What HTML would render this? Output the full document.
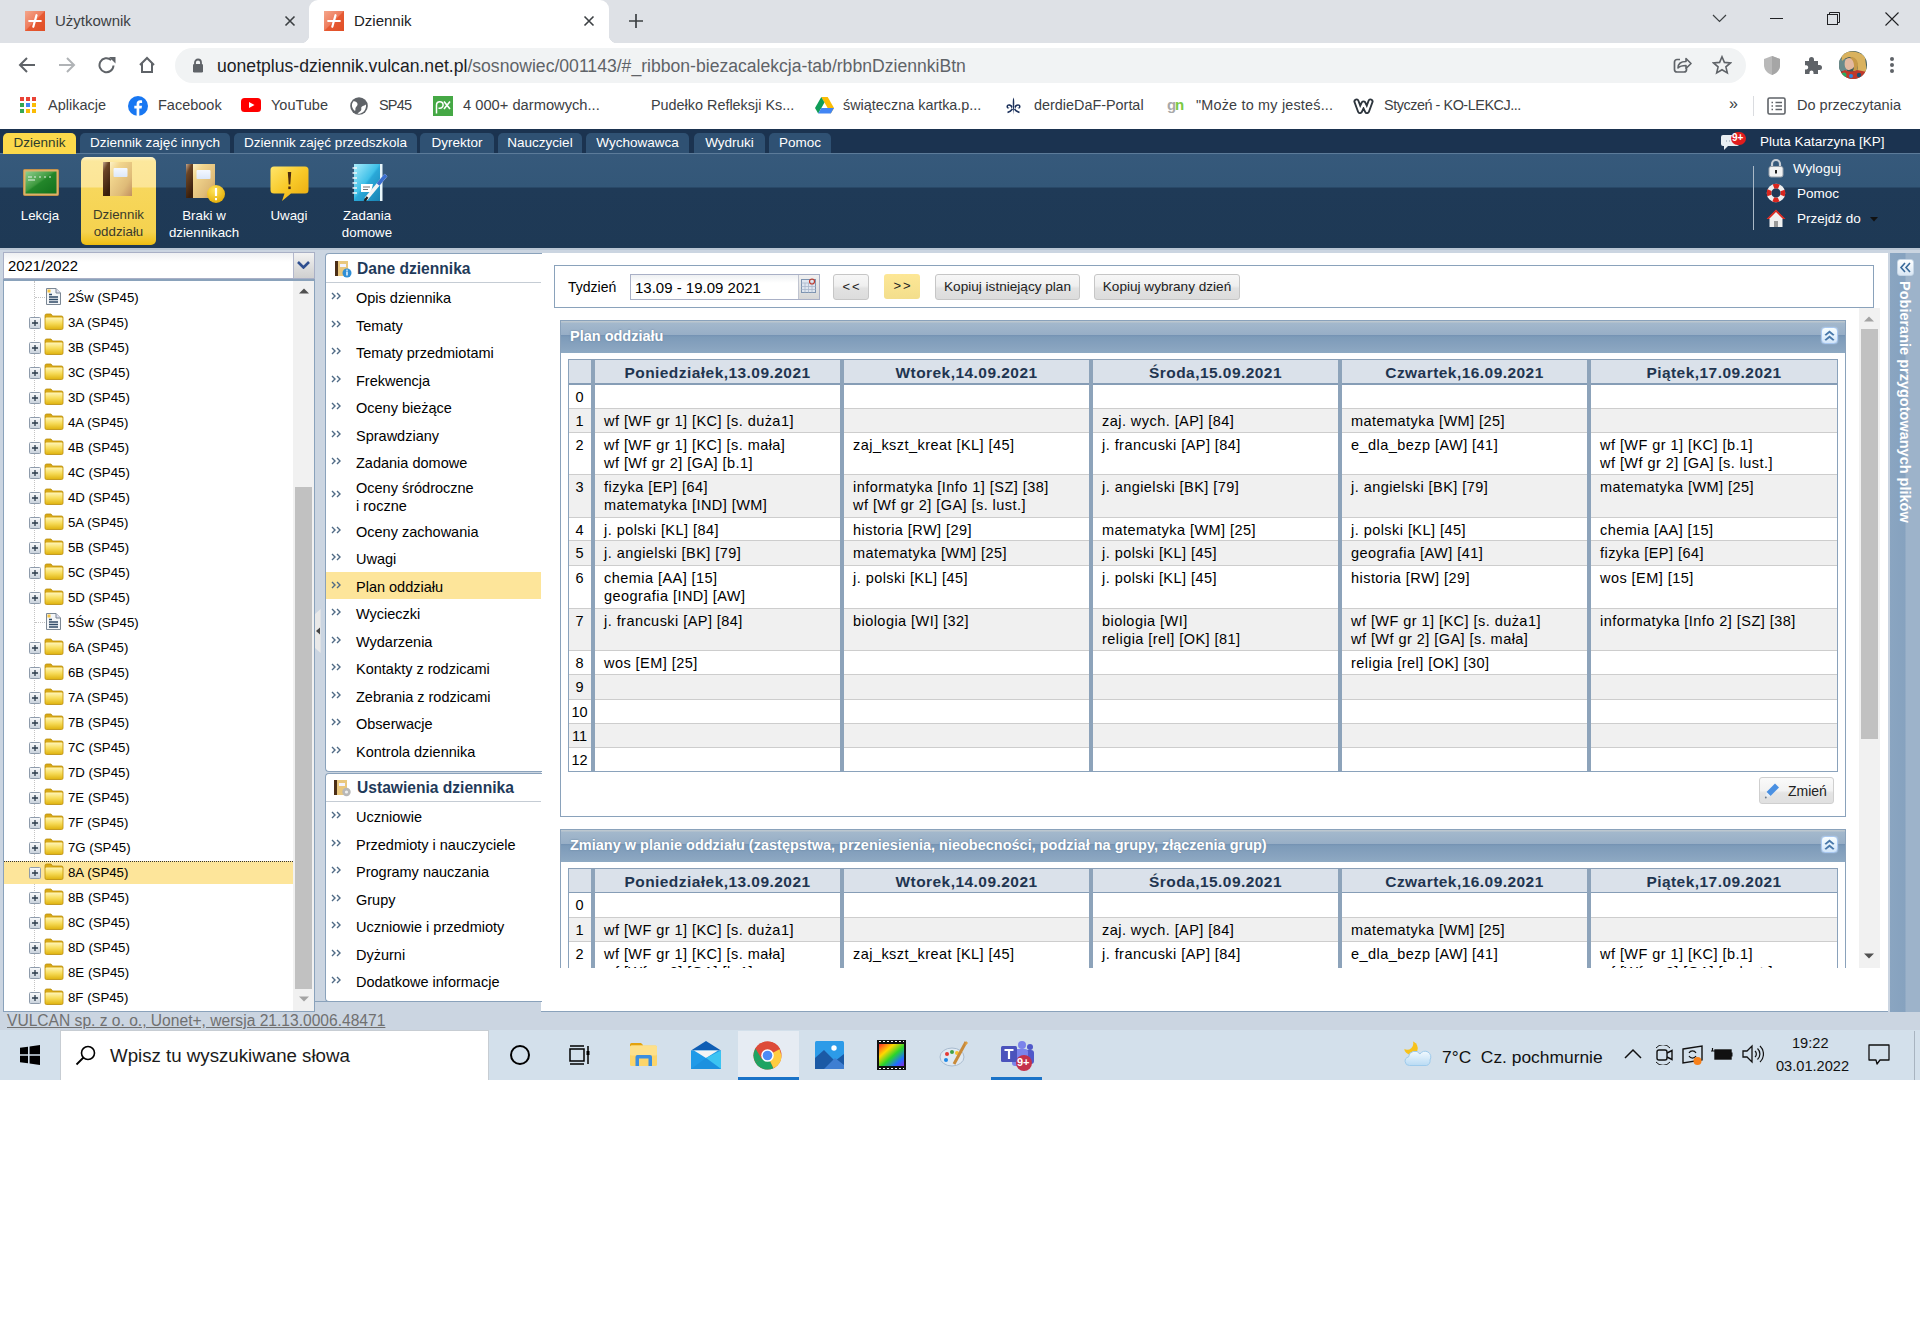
<!DOCTYPE html><html><head><meta charset="utf-8"><title>Dziennik</title><style>
*{box-sizing:border-box}
html,body{margin:0;padding:0}
body{width:1920px;height:1333px;position:relative;overflow:hidden;background:#fff;font-family:"Liberation Sans",sans-serif;color:#000}
.a{position:absolute}
.t{position:absolute;white-space:nowrap;line-height:1}
.ct{position:absolute;white-space:nowrap;line-height:1;font-size:15px;color:#3c4043}
.mtab{position:absolute;top:133px;height:20px;background:#2f5173;border-radius:5px 5px 0 0;color:#fff;font-size:13.5px;line-height:19px;text-align:center;white-space:nowrap}
.rl{position:absolute;color:#fff;font-size:13.3px;line-height:17px;text-align:center;white-space:nowrap}
.tr{position:absolute;left:4px;width:289px;height:25px}
.tri{position:absolute;font-size:13.25px;line-height:1;white-space:nowrap;left:68px}
.mi{position:absolute;left:356px;font-size:14.5px;line-height:18px;white-space:nowrap;color:#000}
.chev{position:absolute;left:331px;width:11px;height:8px}
.cell{position:absolute;font-size:14.5px;line-height:18px;white-space:nowrap;letter-spacing:0.45px;color:#000}
.hd{position:absolute;font-weight:bold;font-size:15.5px;letter-spacing:0.45px;color:#1f3550;text-align:center;line-height:25px;white-space:nowrap}
</style></head><body>
<div class="a" style="left:0;top:0;width:1920px;height:43px;background:#dee1e6"></div>
<div class="a" style="left:25px;top:11px;width:20px;height:20px;background:linear-gradient(135deg,#f4a68b 0,#ee7c5d 48%,#e65a33 52%,#e04e25 100%)"><svg width="20" height="20" viewBox="0 0 20 20" style="position:absolute;left:0;top:0"><path d="M11.5 4.2 L8.3 15.8" stroke="#fff" stroke-width="2.2" stroke-linecap="round"/><path d="M4.2 10 H15.8" stroke="#fff" stroke-width="2.2" stroke-linecap="round"/></svg></div>
<div class="ct" style="left:55px;top:13px">Użytkownik</div>
<svg class="a" style="left:284px;top:15px" width="12" height="12" viewBox="0 0 12 12"><path d="M1.5 1.5 L10.5 10.5 M10.5 1.5 L1.5 10.5" stroke="#3c4043" stroke-width="1.6"/></svg>
<div class="a" style="left:309px;top:0;width:300px;height:43px;background:#fff;border-radius:9px 9px 0 0"></div>
<div class="a" style="left:301px;top:35px;width:8px;height:8px;background:radial-gradient(circle at 0 0,#dee1e6 8px,#fff 8.5px)"></div>
<div class="a" style="left:609px;top:35px;width:8px;height:8px;background:radial-gradient(circle at 100% 0,#dee1e6 8px,#fff 8.5px)"></div>
<div class="a" style="left:324px;top:11px;width:20px;height:20px;background:linear-gradient(135deg,#f4a68b 0,#ee7c5d 48%,#e65a33 52%,#e04e25 100%)"><svg width="20" height="20" viewBox="0 0 20 20" style="position:absolute;left:0;top:0"><path d="M11.5 4.2 L8.3 15.8" stroke="#fff" stroke-width="2.2" stroke-linecap="round"/><path d="M4.2 10 H15.8" stroke="#fff" stroke-width="2.2" stroke-linecap="round"/></svg></div>
<div class="ct" style="left:354px;top:13px;color:#202124">Dziennik</div>
<svg class="a" style="left:583px;top:15px" width="12" height="12" viewBox="0 0 12 12"><path d="M1.5 1.5 L10.5 10.5 M10.5 1.5 L1.5 10.5" stroke="#3c4043" stroke-width="1.6"/></svg>
<svg class="a" style="left:628px;top:13px" width="16" height="16" viewBox="0 0 16 16"><path d="M8 1 V15 M1 8 H15" stroke="#3c4043" stroke-width="1.7"/></svg>
<svg class="a" style="left:1712px;top:13px" width="15" height="10" viewBox="0 0 15 10"><path d="M1 2 L7.5 8.5 L14 2" stroke="#3c4043" stroke-width="1.2" fill="none"/></svg>
<div class="a" style="left:1770px;top:18px;width:13px;height:1px;background:#202124"></div>
<svg class="a" style="left:1826px;top:11px" width="14" height="14" viewBox="0 0 14 14"><rect x="1.5" y="3.5" width="10" height="10" stroke="#202124" fill="none"/><path d="M3.5 3.5 V1.5 H13.5 V11.5 H11.5" stroke="#202124" fill="none"/></svg>
<svg class="a" style="left:1885px;top:12px" width="14" height="14" viewBox="0 0 14 14"><path d="M0.5 0.5 L13.5 13.5 M13.5 0.5 L0.5 13.5" stroke="#202124" stroke-width="1.1"/></svg>
<svg class="a" style="left:18px;top:56px" width="18" height="18" viewBox="0 0 18 18"><path d="M17 9 H2.5 M9 2 L2 9 L9 16" stroke="#5f6368" stroke-width="2" fill="none"/></svg>
<svg class="a" style="left:58px;top:56px" width="18" height="18" viewBox="0 0 18 18"><path d="M1 9 H15.5 M9 2 L16 9 L9 16" stroke="#b0b3b6" stroke-width="2" fill="none"/></svg>
<svg class="a" style="left:98px;top:56px" width="19" height="18" viewBox="0 0 19 18"><path d="M15.5 9.5 A7 7 0 1 1 13.2 4" stroke="#5f6368" stroke-width="2" fill="none"/><path d="M11 1 L17.5 1 L17.5 7.5 Z" fill="#5f6368"/></svg>
<svg class="a" style="left:138px;top:56px" width="18" height="18" viewBox="0 0 18 18"><path d="M2 9 L9 2 L16 9 M4 7.5 V16 H14 V7.5" stroke="#5f6368" stroke-width="2" fill="none" stroke-linejoin="miter"/></svg>
<div class="a" style="left:175px;top:48px;width:1571px;height:35px;background:#f1f3f4;border-radius:18px"></div>
<svg class="a" style="left:192px;top:58px" width="12" height="15" viewBox="0 0 12 15"><path d="M3 6.5 V4.5 A3 3 0 0 1 9 4.5 V6.5" stroke="#5f6368" stroke-width="1.8" fill="none"/><rect x="1" y="6" width="10" height="8.5" rx="1.2" fill="#5f6368"/></svg>
<div class="t" style="left:217px;top:58px;font-size:17.6px;color:#202124">uonetplus-dziennik.vulcan.net.pl<span style="color:#5f6368">/sosnowiec/001143/#_ribbon-biezacalekcja-tab/rbbnDziennkiBtn</span></div>
<svg class="a" style="left:1672px;top:56px" width="20" height="18" viewBox="0 0 20 18"><path d="M8 3.5 H5 A2.5 2.5 0 0 0 2.5 6 V13.5 A2.5 2.5 0 0 0 5 16 H12 A2.5 2.5 0 0 0 14.5 13.5 V12.5" stroke="#5f6368" stroke-width="1.7" fill="none"/><path d="M6 12 C6 7 10 5.5 14 5.5 V2.5 L19 7.5 L14 12.5 V9.5 C11 9.5 8 10 6 12 Z" stroke="#5f6368" stroke-width="1.6" fill="none" stroke-linejoin="round"/></svg>
<svg class="a" style="left:1712px;top:55px" width="20" height="20" viewBox="0 0 20 20"><path d="M10 1.8 L12.4 7.4 L18.5 7.9 L13.9 11.9 L15.3 17.9 L10 14.7 L4.7 17.9 L6.1 11.9 L1.5 7.9 L7.6 7.4 Z" stroke="#5f6368" stroke-width="1.6" fill="none" stroke-linejoin="miter"/></svg>
<svg class="a" style="left:1763px;top:55px" width="18" height="21" viewBox="0 0 18 21"><path d="M9 1 L17 4 V10 C17 15 13.5 18.5 9 20 C4.5 18.5 1 15 1 10 V4 Z" fill="#b9b9b9"/><path d="M9 1 L17 4 V10 C17 15 13.5 18.5 9 20 Z" fill="#a6a6a6"/></svg>
<svg class="a" style="left:1802px;top:55px" width="20" height="20" viewBox="0 0 20 20"><path d="M3 6 H7 V4.5 A2.5 2.5 0 0 1 12 4.5 V6 H16 V10 H17.5 A2.5 2.5 0 0 1 17.5 15 H16 V19 H11.5 V17.5 A2 2 0 0 0 7.5 17.5 V19 H3 V14.5 H4.5 A2.2 2.2 0 0 0 4.5 10.2 H3 Z" fill="#5f6368"/></svg>
<svg class="a" style="left:1839px;top:51px" width="28" height="28" viewBox="0 0 28 28"><defs><clipPath id="avc"><circle cx="14" cy="14" r="14"/></clipPath></defs><g clip-path="url(#avc)"><rect width="28" height="28" fill="#3d5a5a"/><rect x="0" y="8" width="8" height="12" fill="#6a8a8a"/><path d="M2 4 C6 -1 20 -1 26 6 L28 22 L18 20 C20 14 18 8 12 6 C8 6 5 8 3 10 Z" fill="#d9b25e"/><path d="M7 8 C10 6 15 7 16 12 C16 17 12 19 9 19 C6 18 5 14 6 10 Z" fill="#e3b9a0"/><path d="M12 6 C16 6 19 9 19 14 L18 20 L14 20 C16 15 15 9 11 7 Z" fill="#c79a48"/><path d="M0 22 L6 19 C10 21 14 21 18 19 L28 21 V28 H0 Z" fill="#c0392b"/><circle cx="5" cy="24" r="2.5" fill="#27ae60"/><circle cx="12" cy="25" r="2" fill="#2e86de"/><circle cx="20" cy="24" r="2.2" fill="#1a5276"/><circle cx="24" cy="26" r="2" fill="#e74c3c"/></g></svg>
<div class="a" style="left:1890px;top:57px;width:4px;height:4px;border-radius:50%;background:#5f6368"></div>
<div class="a" style="left:1890px;top:63px;width:4px;height:4px;border-radius:50%;background:#5f6368"></div>
<div class="a" style="left:1890px;top:69px;width:4px;height:4px;border-radius:50%;background:#5f6368"></div>
<div class="a" style="left:20px;top:97px;width:4px;height:4px;background:#ea4335"></div>
<div class="a" style="left:26px;top:97px;width:4px;height:4px;background:#ea4335"></div>
<div class="a" style="left:32px;top:97px;width:4px;height:4px;background:#ea4335"></div>
<div class="a" style="left:20px;top:103px;width:4px;height:4px;background:#34a853"></div>
<div class="a" style="left:26px;top:103px;width:4px;height:4px;background:#4285f4"></div>
<div class="a" style="left:32px;top:103px;width:4px;height:4px;background:#fbbc05"></div>
<div class="a" style="left:20px;top:109px;width:4px;height:4px;background:#34a853"></div>
<div class="a" style="left:26px;top:109px;width:4px;height:4px;background:#fbbc05"></div>
<div class="a" style="left:32px;top:109px;width:4px;height:4px;background:#fbbc05"></div>
<div class="ct" style="left:48px;top:98px;font-size:14.5px">Aplikacje</div>
<svg class="a" style="left:128px;top:96px" width="20" height="20" viewBox="0 0 20 20"><circle cx="10" cy="10" r="10" fill="#1877f2"/><path d="M11.3 20 V12.6 H13.6 L14 9.8 H11.3 V8.2 C11.3 7.4 11.6 6.9 12.7 6.9 H14.1 V4.4 C13.8 4.4 13 4.3 12.1 4.3 C10 4.3 8.6 5.6 8.6 7.9 V9.8 H6.3 V12.6 H8.6 V20 Z" fill="#fff"/></svg>
<div class="ct" style="left:158px;top:98px;font-size:14.5px">Facebook</div>
<svg class="a" style="left:241px;top:98px" width="20" height="15" viewBox="0 0 20 15"><rect x="0" y="0" width="20" height="14" rx="3.5" fill="#ff0000"/><path d="M8 4 L13.5 7 L8 10 Z" fill="#fff"/></svg>
<div class="ct" style="left:271px;top:98px;font-size:14.5px">YouTube</div>
<svg class="a" style="left:350px;top:97px" width="18" height="18" viewBox="0 0 18 18"><circle cx="9" cy="9" r="8.8" fill="#5f6368"/><path d="M3.2 4.5 C5 4 7 5 7.5 6.8 C8 8.5 6 9.5 5.5 11 C5.2 12 5.8 13 5 14 C3 12.5 1.5 10 2 7 Z" fill="#fff"/><path d="M9.5 2.2 C12 2.3 14.6 4 15.6 6 C14.5 7.8 12 7.2 11.2 8.8 C10.5 10.5 12.8 11.5 13.8 12.5 C12.5 14.8 10 16 7.6 15.9 C8.5 14.5 10 13.6 9.5 12 C9 10.5 7.8 9.8 8.5 8.2 C9.2 6.6 11 6.2 10.7 4.5 C10.5 3.5 9.8 3 9.5 2.2 Z" fill="#fff" opacity="0"/><path d="M16 7.5 C14.5 9 12.5 8.5 11.5 10 C10.8 11.2 11.8 12.2 11 13.5 C10.2 14.8 8.5 15 7.5 16.8 C12.5 17.2 16.5 13 16 7.5 Z" fill="#fff"/></svg>
<div class="ct" style="left:379px;top:98px;font-size:14.5px;letter-spacing:-0.8px">SP45</div>
<svg class="a" style="left:433px;top:96px" width="20" height="20" viewBox="0 0 20 20"><rect width="20" height="20" fill="#45a845"/><path d="M3.5 17.5 V9 A3.3 3.3 0 1 1 6.8 12.3 H5.5" stroke="#fff" stroke-width="1.5" fill="none"/><path d="M11 5.5 L17 13 M17 5.5 L11 13" stroke="#fff" stroke-width="1.6"/></svg>
<div class="ct" style="left:463px;top:98px;font-size:14.7px">4 000+ darmowych...</div>
<div class="ct" style="left:651px;top:98px;font-size:14.4px">Pudełko Refleksji Ks...</div>
<svg class="a" style="left:815px;top:97px" width="19" height="17" viewBox="0 0 19 17"><path d="M6.3 0 H12.7 L19 11 L15.8 16.5 Z" fill="#fbbc04"/><path d="M6.3 0 L0 11 L3.2 16.5 L9.5 5.5 Z" fill="#0f9d58"/><path d="M3.2 16.5 H15.8 L19 11 H6.3 Z" fill="#4285f4"/></svg>
<div class="ct" style="left:843px;top:98px;font-size:14.4px">świąteczna kartka.p...</div>
<svg class="a" style="left:1005px;top:97px" width="17" height="18" viewBox="0 0 17 18"><path d="M8.5 0.5 C7.5 3 7.5 6 8.5 17.5 C9.5 6 9.5 3 8.5 0.5 Z" fill="#1a2f5a"/><path d="M7.5 9 C5 6 1 7 1.5 10 C2 12 4 12 4.5 10.5 C3.5 11 2.5 10 3.2 9 C4 8 6 9 7 12 Z" fill="#1a2f5a"/><path d="M9.5 9 C12 6 16 7 15.5 10 C15 12 13 12 12.5 10.5 C13.5 11 14.5 10 13.8 9 C13 8 11 9 10 12 Z" fill="#1a2f5a"/><path d="M7.5 12 C6 14 4 15 2.5 15.5 M9.5 12 C11 14 13 15 14.5 15.5" stroke="#1a2f5a" stroke-width="1.5" fill="none"/></svg>
<div class="ct" style="left:1034px;top:98px;font-size:14.4px">derdieDaF-Portal</div>
<div class="t" style="left:1167px;top:97px;font-size:15px;font-weight:bold;color:#a9a9a9;letter-spacing:-1.2px">g<span style="color:#7ac943">n</span></div>
<div class="ct" style="left:1196px;top:98px;font-size:14.4px;letter-spacing:0.2px">"Może to my jesteś...</div>
<svg class="a" style="left:1353px;top:98px" width="22" height="17" viewBox="0 0 22 17"><path d="M3.5 3.5 L7 13 L10.5 5.5 L14 13 L17.5 3.5" stroke="#2d353d" stroke-width="6" fill="none" stroke-linejoin="round" stroke-linecap="round"/><path d="M3.5 3.5 L7 13 L10.5 5.5 L14 13 L17.5 3.5" stroke="#fff" stroke-width="2.2" fill="none" stroke-linejoin="round" stroke-linecap="round"/></svg>
<div class="ct" style="left:1384px;top:98px;font-size:14.4px;letter-spacing:-0.45px">Styczeń - KO-LEKCJ...</div>
<div class="t" style="left:1729px;top:96px;font-size:16px;color:#3c4043">»</div>
<div class="a" style="left:1753px;top:96px;width:1px;height:20px;background:#dadce0"></div>
<svg class="a" style="left:1767px;top:97px" width="19" height="18" viewBox="0 0 19 18"><rect x="1" y="1" width="17" height="16" rx="1.5" stroke="#5f6368" stroke-width="1.6" fill="none"/><path d="M4.5 5.5 H6 M8.5 5.5 H15 M4.5 9 H6 M8.5 9 H15 M4.5 12.5 H6 M8.5 12.5 H15" stroke="#5f6368" stroke-width="1.6"/></svg>
<div class="ct" style="left:1797px;top:98px;font-size:14.5px">Do przeczytania</div>
<div class="a" style="left:0;top:129px;width:1920px;height:25px;background:#1b3350"></div>
<div class="a" style="left:0;top:153px;width:1920px;height:95px;background:linear-gradient(#3a5d80 0,#36597b 2px,#335778 34px,#1f3a57 35px,#1e3955 100%)"></div>
<div class="a" style="left:0;top:153px;width:1920px;height:1px;background:#5c7b99"></div>
<div class="mtab" style="left:3px;width:73px;background:#fcd94b;color:#2c3c2c;height:21px">Dziennik</div>
<div class="mtab" style="left:80px;width:150px">Dziennik zajęć innych</div>
<div class="mtab" style="left:234px;width:183px">Dziennik zajęć przedszkola</div>
<div class="mtab" style="left:420px;width:74px">Dyrektor</div>
<div class="mtab" style="left:498px;width:84px">Nauczyciel</div>
<div class="mtab" style="left:586px;width:103px">Wychowawca</div>
<div class="mtab" style="left:694px;width:71px">Wydruki</div>
<div class="mtab" style="left:769px;width:62px">Pomoc</div>
<div class="a" style="left:81px;top:157px;width:75px;height:88px;border-radius:5px;background:linear-gradient(#fdf3cc 0,#fce89d 4px,#fce596 30px,#f7d75c 31px,#f5d24f 75px,#efc21d 86px,#e9b90f 100%)"></div>
<svg width="0" height="0" style="position:absolute"><defs><linearGradient id="sp" x1="0" y1="0" x2="0.4" y2="1"><stop offset="0" stop-color="#c4a68c"/><stop offset=".3" stop-color="#6b4526"/><stop offset="1" stop-color="#3a1f0c"/></linearGradient><linearGradient id="cv" x1="0" y1="0" x2="1" y2="1"><stop offset="0" stop-color="#fdf1c4"/><stop offset=".25" stop-color="#f2d68e"/><stop offset=".7" stop-color="#dfbb78"/><stop offset="1" stop-color="#c29060"/></linearGradient><linearGradient id="lb" x1="0" y1="0" x2="0" y2="1"><stop offset="0" stop-color="#f4f8ff"/><stop offset="1" stop-color="#dde8f8"/></linearGradient><radialGradient id="ex" cx=".4" cy=".3" r=".8"><stop offset="0" stop-color="#ffe45a"/><stop offset="1" stop-color="#e2a800"/></radialGradient><linearGradient id="ub" x1="0" y1="0" x2="1" y2="1"><stop offset="0" stop-color="#ffe56a"/><stop offset=".5" stop-color="#f8c928"/><stop offset="1" stop-color="#eaa90e"/></linearGradient><linearGradient id="nb" x1="0" y1="0" x2="1" y2="1"><stop offset="0" stop-color="#a8ecfb"/><stop offset=".45" stop-color="#3fc0e8"/><stop offset=".5" stop-color="#2aa8d8"/><stop offset="1" stop-color="#1780b0"/></linearGradient><linearGradient id="ch" x1="0" y1="0" x2="1" y2="1"><stop offset="0" stop-color="#8fcf8f"/><stop offset=".45" stop-color="#3f9a3f"/><stop offset=".5" stop-color="#23862a"/><stop offset="1" stop-color="#12701c"/></linearGradient></defs></svg>
<svg class="a" style="left:23px;top:169px" width="36" height="27" viewBox="0 0 36 27"><rect x="0.5" y="0.5" width="35" height="26" rx="1" fill="#dcb06a" stroke="#c4924a"/><rect x="2.5" y="2.5" width="31" height="22" fill="url(#ch)"/><path d="M5 8 H9 M11 8 H13 M16 8 H18 M21 8 H23 M26 8 H28 M5 11 H12" stroke="#e8f4e8" stroke-width="1.2"/></svg>
<svg class="a" style="left:103px;top:162px" width="30" height="34" viewBox="0 0 30 34"><rect x="0" y="0" width="7" height="34" fill="url(#sp)"/><rect x="7" y="0" width="22" height="34" fill="url(#cv)"/><rect x="10.5" y="6" width="14" height="9" rx="1" fill="url(#lb)"/></svg>
<svg class="a" style="left:186px;top:164px" width="30" height="34" viewBox="0 0 30 34"><rect x="0" y="0" width="7" height="34" fill="url(#sp)"/><rect x="7" y="0" width="22" height="34" fill="url(#cv)"/><rect x="10.5" y="6" width="14" height="9" rx="1" fill="url(#lb)"/></svg>
<svg class="a" style="left:206px;top:184px" width="20" height="20" viewBox="0 0 20 20"><circle cx="10" cy="10" r="9" fill="url(#ex)"/><path d="M10 4 V12" stroke="#fff" stroke-width="2.2"/><rect x="9" y="14" width="2" height="2.2" fill="#fff"/></svg>
<svg class="a" style="left:270px;top:166px" width="39" height="36" viewBox="0 0 39 36"><path d="M4 0.5 H35 A3.5 3.5 0 0 1 38.5 4 V24 A3.5 3.5 0 0 1 35 27.5 H21 L12 35 L14.5 27.5 H4 A3.5 3.5 0 0 1 0.5 24 V4 A3.5 3.5 0 0 1 4 0.5 Z" fill="url(#ub)"/><path d="M17.8 6 H21.2 L20.3 18.5 H18.7 Z" fill="#4a2a10"/><rect x="18.3" y="20.5" width="2.4" height="2.6" fill="#4a2a10"/></svg>
<svg class="a" style="left:352px;top:163px" width="36" height="40" viewBox="0 0 36 40"><rect x="2" y="1" width="28" height="37" fill="url(#nb)"/><rect x="28" y="1" width="2.5" height="37" fill="#e8f6fb"/><path d="M0.5 5 H5 M0.5 10 H5 M0.5 15 H5 M0.5 20 H5 M0.5 25 H5 M0.5 30 H5" stroke="#eef4f7" stroke-width="1.6"/><path d="M9 21 H21 L19 29 H9 Z" fill="#fff"/><path d="M11 24 H18 M11 26.5 H16" stroke="#777" stroke-width="1"/><path d="M34 12 L14 36" stroke="#f4f4f4" stroke-width="3.6"/><path d="M34 12 L26 21.5" stroke="#3a6fd0" stroke-width="3.6"/><path d="M15.5 34 L12.5 38" stroke="#222" stroke-width="2.2"/></svg>
<div class="rl" style="left:0;width:80px;top:207px">Lekcja</div>
<div class="rl" style="left:81px;width:75px;top:206px;color:#3a3a2a">Dziennik<br>oddziału</div>
<div class="rl" style="left:159px;width:90px;top:207px">Braki w<br>dziennikach</div>
<div class="rl" style="left:249px;width:80px;top:207px">Uwagi</div>
<div class="rl" style="left:327px;width:80px;top:207px">Zadania<br>domowe</div>
<svg class="a" style="left:1720px;top:134px" width="20" height="18" viewBox="0 0 20 18"><path d="M3 1 H17 A2 2 0 0 1 19 3 V10 A2 2 0 0 1 17 12 H8 L4 16 V12 H3 A2 2 0 0 1 1 10 V3 A2 2 0 0 1 3 1 Z" fill="#e8eef2"/><path d="M6 7 H7 M9 7 H10 M12 7 H13" stroke="#8899aa" stroke-width="1"/></svg>
<div class="a" style="left:1731px;top:132px;width:15px;height:13px;border-radius:7px;background:#e11d1d"></div>
<div class="t" style="left:1732px;top:133px;font-size:10px;font-weight:bold;color:#fff">9+</div>
<div class="t" style="left:1760px;top:135px;font-size:13.5px;color:#fff">Pluta Katarzyna [KP]</div>
<div class="a" style="left:1753px;top:166px;width:1px;height:64px;background:#a9b8c6"></div>
<svg class="a" style="left:1767px;top:158px" width="18" height="20" viewBox="0 0 18 20"><path d="M5 9 V6 A4 4 0 0 1 13 6 V9" stroke="#c8ced6" stroke-width="2.2" fill="none"/><rect x="2" y="8.5" width="14" height="10.5" rx="2" fill="#f2f2f2" stroke="#9aa3ad"/><rect x="8" y="12" width="2" height="3.5" fill="#222"/></svg>
<div class="t" style="left:1793px;top:162px;font-size:13.5px;color:#fff">Wyloguj</div>
<svg class="a" style="left:1766px;top:183px" width="20" height="20" viewBox="0 0 20 20"><circle cx="10" cy="10" r="7" stroke="#eeeeee" stroke-width="4.5" fill="none"/><circle cx="10" cy="10" r="7" stroke="#d8261e" stroke-width="4.5" fill="none" stroke-dasharray="5.5 5.5" stroke-dashoffset="2.75"/></svg>
<div class="t" style="left:1797px;top:187px;font-size:13.5px;color:#fff">Pomoc</div>
<svg class="a" style="left:1766px;top:209px" width="20" height="19" viewBox="0 0 20 19"><path d="M10 1 L19 10 L16.5 10 L16.5 18 L3.5 18 L3.5 10 L1 10 Z" fill="#f0f0f0"/><path d="M10 0.5 L19.5 10 L17 10 L10 3 L3 10 L0.5 10 Z" fill="#d8261e"/><rect x="8" y="12" width="4" height="6" fill="#999"/></svg>
<div class="t" style="left:1797px;top:212px;font-size:13.5px;color:#fff">Przejdź do</div>
<svg class="a" style="left:1870px;top:217px" width="8" height="5" viewBox="0 0 8 5"><path d="M0 0 H8 L4 4.5 Z" fill="#111"/></svg>
<div class="a" style="left:0;top:248px;width:1920px;height:783px;background:#cbd5e1"></div>
<div class="a" style="left:0;top:248px;width:1920px;height:2px;background:#b9c6d4"></div>
<div class="a" style="left:3px;top:252px;width:312px;height:27px;border:1px solid #a9b0c6;background:linear-gradient(#eef0f2 0,#fff 9px)"></div>
<div class="t" style="left:8px;top:259px;font-size:14.8px">2021/2022</div>
<div class="a" style="left:293px;top:253px;width:21px;height:25px;border-left:1px solid #b3b8cc;background:linear-gradient(#f3f3f3 0,#dcdcdc 60%,#d0d0d0 100%)"></div>
<svg class="a" style="left:297px;top:261px" width="13" height="8" viewBox="0 0 13 8"><path d="M1 1 L6.5 6.5 L12 1" stroke="#2f4f90" stroke-width="2.6" fill="none"/></svg>
<div class="a" style="left:3px;top:279px;width:312px;height:733px;border:1px solid #8aa2bb;border-top-width:2px;background:#fff"></div>
<div class="a" style="left:293px;top:281px;width:21px;height:730px;background:#f1f1f1"></div>
<div class="a" style="left:295px;top:487px;width:17px;height:502px;background:#c1c1c1"></div>
<svg class="a" style="left:299px;top:288px" width="10" height="6" viewBox="0 0 10 6"><path d="M0 5.5 L5 0.5 L10 5.5 Z" fill="#505050"/></svg>
<svg class="a" style="left:299px;top:996px" width="10" height="6" viewBox="0 0 10 6"><path d="M0 0.5 L5 5.5 L10 0.5 Z" fill="#a3a3a3"/></svg>
<div class="a" style="left:34px;top:281px;width:1px;height:716px;border-left:1px dotted #c4c4c4"></div>
<div class="a" style="left:35px;top:297px;width:10px;height:1px;border-top:1px dotted #c4c4c4"></div>
<svg class="a" style="left:46px;top:288px" width="15" height="17" viewBox="0 0 15 17"><path d="M0.5 0.5 H10 L14.5 5 V16.5 H0.5 Z" fill="#f4f6f8" stroke="#7b8794"/><path d="M10 0.5 V5 H14.5" fill="#dde" stroke="#7b8794"/><rect x="1.5" y="1.5" width="3" height="3" fill="#f5c242"/><path d="M3 6.5 H6 M3 9 H12 M3 11.5 H12 M3 14 H12" stroke="#2f4a66" stroke-width="1.4"/></svg>
<div class="tri" style="top:291px">2Św (SP45)</div>
<svg class="a" style="left:29px;top:317px" width="12" height="12" viewBox="0 0 12 12"><rect x="0.5" y="0.5" width="11" height="11" rx="1" fill="url(#pb)" stroke="#8e9bab"/><path d="M3 6 H9 M6 3 V9" stroke="#2a3a4a" stroke-width="1.3"/></svg>
<svg class="a" style="left:44px;top:313px" width="20" height="17" viewBox="0 0 20 17"><path d="M1 2.5 A1.5 1.5 0 0 1 2.5 1 H7 L8.5 3 H17.5 A1.5 1.5 0 0 1 19 4.5 V15 A1.5 1.5 0 0 1 17.5 16.5 H2.5 A1.5 1.5 0 0 1 1 15 Z" fill="#d9a915" stroke="#b98d0a" stroke-width="0.8"/><rect x="1.5" y="4.5" width="17" height="11.5" rx="1" fill="url(#fg)"/></svg>
<div class="tri" style="top:316px">3A (SP45)</div>
<svg class="a" style="left:29px;top:342px" width="12" height="12" viewBox="0 0 12 12"><rect x="0.5" y="0.5" width="11" height="11" rx="1" fill="url(#pb)" stroke="#8e9bab"/><path d="M3 6 H9 M6 3 V9" stroke="#2a3a4a" stroke-width="1.3"/></svg>
<svg class="a" style="left:44px;top:338px" width="20" height="17" viewBox="0 0 20 17"><path d="M1 2.5 A1.5 1.5 0 0 1 2.5 1 H7 L8.5 3 H17.5 A1.5 1.5 0 0 1 19 4.5 V15 A1.5 1.5 0 0 1 17.5 16.5 H2.5 A1.5 1.5 0 0 1 1 15 Z" fill="#d9a915" stroke="#b98d0a" stroke-width="0.8"/><rect x="1.5" y="4.5" width="17" height="11.5" rx="1" fill="url(#fg)"/></svg>
<div class="tri" style="top:341px">3B (SP45)</div>
<svg class="a" style="left:29px;top:367px" width="12" height="12" viewBox="0 0 12 12"><rect x="0.5" y="0.5" width="11" height="11" rx="1" fill="url(#pb)" stroke="#8e9bab"/><path d="M3 6 H9 M6 3 V9" stroke="#2a3a4a" stroke-width="1.3"/></svg>
<svg class="a" style="left:44px;top:363px" width="20" height="17" viewBox="0 0 20 17"><path d="M1 2.5 A1.5 1.5 0 0 1 2.5 1 H7 L8.5 3 H17.5 A1.5 1.5 0 0 1 19 4.5 V15 A1.5 1.5 0 0 1 17.5 16.5 H2.5 A1.5 1.5 0 0 1 1 15 Z" fill="#d9a915" stroke="#b98d0a" stroke-width="0.8"/><rect x="1.5" y="4.5" width="17" height="11.5" rx="1" fill="url(#fg)"/></svg>
<div class="tri" style="top:366px">3C (SP45)</div>
<svg class="a" style="left:29px;top:392px" width="12" height="12" viewBox="0 0 12 12"><rect x="0.5" y="0.5" width="11" height="11" rx="1" fill="url(#pb)" stroke="#8e9bab"/><path d="M3 6 H9 M6 3 V9" stroke="#2a3a4a" stroke-width="1.3"/></svg>
<svg class="a" style="left:44px;top:388px" width="20" height="17" viewBox="0 0 20 17"><path d="M1 2.5 A1.5 1.5 0 0 1 2.5 1 H7 L8.5 3 H17.5 A1.5 1.5 0 0 1 19 4.5 V15 A1.5 1.5 0 0 1 17.5 16.5 H2.5 A1.5 1.5 0 0 1 1 15 Z" fill="#d9a915" stroke="#b98d0a" stroke-width="0.8"/><rect x="1.5" y="4.5" width="17" height="11.5" rx="1" fill="url(#fg)"/></svg>
<div class="tri" style="top:391px">3D (SP45)</div>
<svg class="a" style="left:29px;top:417px" width="12" height="12" viewBox="0 0 12 12"><rect x="0.5" y="0.5" width="11" height="11" rx="1" fill="url(#pb)" stroke="#8e9bab"/><path d="M3 6 H9 M6 3 V9" stroke="#2a3a4a" stroke-width="1.3"/></svg>
<svg class="a" style="left:44px;top:413px" width="20" height="17" viewBox="0 0 20 17"><path d="M1 2.5 A1.5 1.5 0 0 1 2.5 1 H7 L8.5 3 H17.5 A1.5 1.5 0 0 1 19 4.5 V15 A1.5 1.5 0 0 1 17.5 16.5 H2.5 A1.5 1.5 0 0 1 1 15 Z" fill="#d9a915" stroke="#b98d0a" stroke-width="0.8"/><rect x="1.5" y="4.5" width="17" height="11.5" rx="1" fill="url(#fg)"/></svg>
<div class="tri" style="top:416px">4A (SP45)</div>
<svg class="a" style="left:29px;top:442px" width="12" height="12" viewBox="0 0 12 12"><rect x="0.5" y="0.5" width="11" height="11" rx="1" fill="url(#pb)" stroke="#8e9bab"/><path d="M3 6 H9 M6 3 V9" stroke="#2a3a4a" stroke-width="1.3"/></svg>
<svg class="a" style="left:44px;top:438px" width="20" height="17" viewBox="0 0 20 17"><path d="M1 2.5 A1.5 1.5 0 0 1 2.5 1 H7 L8.5 3 H17.5 A1.5 1.5 0 0 1 19 4.5 V15 A1.5 1.5 0 0 1 17.5 16.5 H2.5 A1.5 1.5 0 0 1 1 15 Z" fill="#d9a915" stroke="#b98d0a" stroke-width="0.8"/><rect x="1.5" y="4.5" width="17" height="11.5" rx="1" fill="url(#fg)"/></svg>
<div class="tri" style="top:441px">4B (SP45)</div>
<svg class="a" style="left:29px;top:467px" width="12" height="12" viewBox="0 0 12 12"><rect x="0.5" y="0.5" width="11" height="11" rx="1" fill="url(#pb)" stroke="#8e9bab"/><path d="M3 6 H9 M6 3 V9" stroke="#2a3a4a" stroke-width="1.3"/></svg>
<svg class="a" style="left:44px;top:463px" width="20" height="17" viewBox="0 0 20 17"><path d="M1 2.5 A1.5 1.5 0 0 1 2.5 1 H7 L8.5 3 H17.5 A1.5 1.5 0 0 1 19 4.5 V15 A1.5 1.5 0 0 1 17.5 16.5 H2.5 A1.5 1.5 0 0 1 1 15 Z" fill="#d9a915" stroke="#b98d0a" stroke-width="0.8"/><rect x="1.5" y="4.5" width="17" height="11.5" rx="1" fill="url(#fg)"/></svg>
<div class="tri" style="top:466px">4C (SP45)</div>
<svg class="a" style="left:29px;top:492px" width="12" height="12" viewBox="0 0 12 12"><rect x="0.5" y="0.5" width="11" height="11" rx="1" fill="url(#pb)" stroke="#8e9bab"/><path d="M3 6 H9 M6 3 V9" stroke="#2a3a4a" stroke-width="1.3"/></svg>
<svg class="a" style="left:44px;top:488px" width="20" height="17" viewBox="0 0 20 17"><path d="M1 2.5 A1.5 1.5 0 0 1 2.5 1 H7 L8.5 3 H17.5 A1.5 1.5 0 0 1 19 4.5 V15 A1.5 1.5 0 0 1 17.5 16.5 H2.5 A1.5 1.5 0 0 1 1 15 Z" fill="#d9a915" stroke="#b98d0a" stroke-width="0.8"/><rect x="1.5" y="4.5" width="17" height="11.5" rx="1" fill="url(#fg)"/></svg>
<div class="tri" style="top:491px">4D (SP45)</div>
<svg class="a" style="left:29px;top:517px" width="12" height="12" viewBox="0 0 12 12"><rect x="0.5" y="0.5" width="11" height="11" rx="1" fill="url(#pb)" stroke="#8e9bab"/><path d="M3 6 H9 M6 3 V9" stroke="#2a3a4a" stroke-width="1.3"/></svg>
<svg class="a" style="left:44px;top:513px" width="20" height="17" viewBox="0 0 20 17"><path d="M1 2.5 A1.5 1.5 0 0 1 2.5 1 H7 L8.5 3 H17.5 A1.5 1.5 0 0 1 19 4.5 V15 A1.5 1.5 0 0 1 17.5 16.5 H2.5 A1.5 1.5 0 0 1 1 15 Z" fill="#d9a915" stroke="#b98d0a" stroke-width="0.8"/><rect x="1.5" y="4.5" width="17" height="11.5" rx="1" fill="url(#fg)"/></svg>
<div class="tri" style="top:516px">5A (SP45)</div>
<svg class="a" style="left:29px;top:542px" width="12" height="12" viewBox="0 0 12 12"><rect x="0.5" y="0.5" width="11" height="11" rx="1" fill="url(#pb)" stroke="#8e9bab"/><path d="M3 6 H9 M6 3 V9" stroke="#2a3a4a" stroke-width="1.3"/></svg>
<svg class="a" style="left:44px;top:538px" width="20" height="17" viewBox="0 0 20 17"><path d="M1 2.5 A1.5 1.5 0 0 1 2.5 1 H7 L8.5 3 H17.5 A1.5 1.5 0 0 1 19 4.5 V15 A1.5 1.5 0 0 1 17.5 16.5 H2.5 A1.5 1.5 0 0 1 1 15 Z" fill="#d9a915" stroke="#b98d0a" stroke-width="0.8"/><rect x="1.5" y="4.5" width="17" height="11.5" rx="1" fill="url(#fg)"/></svg>
<div class="tri" style="top:541px">5B (SP45)</div>
<svg class="a" style="left:29px;top:567px" width="12" height="12" viewBox="0 0 12 12"><rect x="0.5" y="0.5" width="11" height="11" rx="1" fill="url(#pb)" stroke="#8e9bab"/><path d="M3 6 H9 M6 3 V9" stroke="#2a3a4a" stroke-width="1.3"/></svg>
<svg class="a" style="left:44px;top:563px" width="20" height="17" viewBox="0 0 20 17"><path d="M1 2.5 A1.5 1.5 0 0 1 2.5 1 H7 L8.5 3 H17.5 A1.5 1.5 0 0 1 19 4.5 V15 A1.5 1.5 0 0 1 17.5 16.5 H2.5 A1.5 1.5 0 0 1 1 15 Z" fill="#d9a915" stroke="#b98d0a" stroke-width="0.8"/><rect x="1.5" y="4.5" width="17" height="11.5" rx="1" fill="url(#fg)"/></svg>
<div class="tri" style="top:566px">5C (SP45)</div>
<svg class="a" style="left:29px;top:592px" width="12" height="12" viewBox="0 0 12 12"><rect x="0.5" y="0.5" width="11" height="11" rx="1" fill="url(#pb)" stroke="#8e9bab"/><path d="M3 6 H9 M6 3 V9" stroke="#2a3a4a" stroke-width="1.3"/></svg>
<svg class="a" style="left:44px;top:588px" width="20" height="17" viewBox="0 0 20 17"><path d="M1 2.5 A1.5 1.5 0 0 1 2.5 1 H7 L8.5 3 H17.5 A1.5 1.5 0 0 1 19 4.5 V15 A1.5 1.5 0 0 1 17.5 16.5 H2.5 A1.5 1.5 0 0 1 1 15 Z" fill="#d9a915" stroke="#b98d0a" stroke-width="0.8"/><rect x="1.5" y="4.5" width="17" height="11.5" rx="1" fill="url(#fg)"/></svg>
<div class="tri" style="top:591px">5D (SP45)</div>
<div class="a" style="left:35px;top:622px;width:10px;height:1px;border-top:1px dotted #c4c4c4"></div>
<svg class="a" style="left:46px;top:613px" width="15" height="17" viewBox="0 0 15 17"><path d="M0.5 0.5 H10 L14.5 5 V16.5 H0.5 Z" fill="#f4f6f8" stroke="#7b8794"/><path d="M10 0.5 V5 H14.5" fill="#dde" stroke="#7b8794"/><rect x="1.5" y="1.5" width="3" height="3" fill="#f5c242"/><path d="M3 6.5 H6 M3 9 H12 M3 11.5 H12 M3 14 H12" stroke="#2f4a66" stroke-width="1.4"/></svg>
<div class="tri" style="top:616px">5Św (SP45)</div>
<svg class="a" style="left:29px;top:642px" width="12" height="12" viewBox="0 0 12 12"><rect x="0.5" y="0.5" width="11" height="11" rx="1" fill="url(#pb)" stroke="#8e9bab"/><path d="M3 6 H9 M6 3 V9" stroke="#2a3a4a" stroke-width="1.3"/></svg>
<svg class="a" style="left:44px;top:638px" width="20" height="17" viewBox="0 0 20 17"><path d="M1 2.5 A1.5 1.5 0 0 1 2.5 1 H7 L8.5 3 H17.5 A1.5 1.5 0 0 1 19 4.5 V15 A1.5 1.5 0 0 1 17.5 16.5 H2.5 A1.5 1.5 0 0 1 1 15 Z" fill="#d9a915" stroke="#b98d0a" stroke-width="0.8"/><rect x="1.5" y="4.5" width="17" height="11.5" rx="1" fill="url(#fg)"/></svg>
<div class="tri" style="top:641px">6A (SP45)</div>
<svg class="a" style="left:29px;top:667px" width="12" height="12" viewBox="0 0 12 12"><rect x="0.5" y="0.5" width="11" height="11" rx="1" fill="url(#pb)" stroke="#8e9bab"/><path d="M3 6 H9 M6 3 V9" stroke="#2a3a4a" stroke-width="1.3"/></svg>
<svg class="a" style="left:44px;top:663px" width="20" height="17" viewBox="0 0 20 17"><path d="M1 2.5 A1.5 1.5 0 0 1 2.5 1 H7 L8.5 3 H17.5 A1.5 1.5 0 0 1 19 4.5 V15 A1.5 1.5 0 0 1 17.5 16.5 H2.5 A1.5 1.5 0 0 1 1 15 Z" fill="#d9a915" stroke="#b98d0a" stroke-width="0.8"/><rect x="1.5" y="4.5" width="17" height="11.5" rx="1" fill="url(#fg)"/></svg>
<div class="tri" style="top:666px">6B (SP45)</div>
<svg class="a" style="left:29px;top:692px" width="12" height="12" viewBox="0 0 12 12"><rect x="0.5" y="0.5" width="11" height="11" rx="1" fill="url(#pb)" stroke="#8e9bab"/><path d="M3 6 H9 M6 3 V9" stroke="#2a3a4a" stroke-width="1.3"/></svg>
<svg class="a" style="left:44px;top:688px" width="20" height="17" viewBox="0 0 20 17"><path d="M1 2.5 A1.5 1.5 0 0 1 2.5 1 H7 L8.5 3 H17.5 A1.5 1.5 0 0 1 19 4.5 V15 A1.5 1.5 0 0 1 17.5 16.5 H2.5 A1.5 1.5 0 0 1 1 15 Z" fill="#d9a915" stroke="#b98d0a" stroke-width="0.8"/><rect x="1.5" y="4.5" width="17" height="11.5" rx="1" fill="url(#fg)"/></svg>
<div class="tri" style="top:691px">7A (SP45)</div>
<svg class="a" style="left:29px;top:717px" width="12" height="12" viewBox="0 0 12 12"><rect x="0.5" y="0.5" width="11" height="11" rx="1" fill="url(#pb)" stroke="#8e9bab"/><path d="M3 6 H9 M6 3 V9" stroke="#2a3a4a" stroke-width="1.3"/></svg>
<svg class="a" style="left:44px;top:713px" width="20" height="17" viewBox="0 0 20 17"><path d="M1 2.5 A1.5 1.5 0 0 1 2.5 1 H7 L8.5 3 H17.5 A1.5 1.5 0 0 1 19 4.5 V15 A1.5 1.5 0 0 1 17.5 16.5 H2.5 A1.5 1.5 0 0 1 1 15 Z" fill="#d9a915" stroke="#b98d0a" stroke-width="0.8"/><rect x="1.5" y="4.5" width="17" height="11.5" rx="1" fill="url(#fg)"/></svg>
<div class="tri" style="top:716px">7B (SP45)</div>
<svg class="a" style="left:29px;top:742px" width="12" height="12" viewBox="0 0 12 12"><rect x="0.5" y="0.5" width="11" height="11" rx="1" fill="url(#pb)" stroke="#8e9bab"/><path d="M3 6 H9 M6 3 V9" stroke="#2a3a4a" stroke-width="1.3"/></svg>
<svg class="a" style="left:44px;top:738px" width="20" height="17" viewBox="0 0 20 17"><path d="M1 2.5 A1.5 1.5 0 0 1 2.5 1 H7 L8.5 3 H17.5 A1.5 1.5 0 0 1 19 4.5 V15 A1.5 1.5 0 0 1 17.5 16.5 H2.5 A1.5 1.5 0 0 1 1 15 Z" fill="#d9a915" stroke="#b98d0a" stroke-width="0.8"/><rect x="1.5" y="4.5" width="17" height="11.5" rx="1" fill="url(#fg)"/></svg>
<div class="tri" style="top:741px">7C (SP45)</div>
<svg class="a" style="left:29px;top:767px" width="12" height="12" viewBox="0 0 12 12"><rect x="0.5" y="0.5" width="11" height="11" rx="1" fill="url(#pb)" stroke="#8e9bab"/><path d="M3 6 H9 M6 3 V9" stroke="#2a3a4a" stroke-width="1.3"/></svg>
<svg class="a" style="left:44px;top:763px" width="20" height="17" viewBox="0 0 20 17"><path d="M1 2.5 A1.5 1.5 0 0 1 2.5 1 H7 L8.5 3 H17.5 A1.5 1.5 0 0 1 19 4.5 V15 A1.5 1.5 0 0 1 17.5 16.5 H2.5 A1.5 1.5 0 0 1 1 15 Z" fill="#d9a915" stroke="#b98d0a" stroke-width="0.8"/><rect x="1.5" y="4.5" width="17" height="11.5" rx="1" fill="url(#fg)"/></svg>
<div class="tri" style="top:766px">7D (SP45)</div>
<svg class="a" style="left:29px;top:792px" width="12" height="12" viewBox="0 0 12 12"><rect x="0.5" y="0.5" width="11" height="11" rx="1" fill="url(#pb)" stroke="#8e9bab"/><path d="M3 6 H9 M6 3 V9" stroke="#2a3a4a" stroke-width="1.3"/></svg>
<svg class="a" style="left:44px;top:788px" width="20" height="17" viewBox="0 0 20 17"><path d="M1 2.5 A1.5 1.5 0 0 1 2.5 1 H7 L8.5 3 H17.5 A1.5 1.5 0 0 1 19 4.5 V15 A1.5 1.5 0 0 1 17.5 16.5 H2.5 A1.5 1.5 0 0 1 1 15 Z" fill="#d9a915" stroke="#b98d0a" stroke-width="0.8"/><rect x="1.5" y="4.5" width="17" height="11.5" rx="1" fill="url(#fg)"/></svg>
<div class="tri" style="top:791px">7E (SP45)</div>
<svg class="a" style="left:29px;top:817px" width="12" height="12" viewBox="0 0 12 12"><rect x="0.5" y="0.5" width="11" height="11" rx="1" fill="url(#pb)" stroke="#8e9bab"/><path d="M3 6 H9 M6 3 V9" stroke="#2a3a4a" stroke-width="1.3"/></svg>
<svg class="a" style="left:44px;top:813px" width="20" height="17" viewBox="0 0 20 17"><path d="M1 2.5 A1.5 1.5 0 0 1 2.5 1 H7 L8.5 3 H17.5 A1.5 1.5 0 0 1 19 4.5 V15 A1.5 1.5 0 0 1 17.5 16.5 H2.5 A1.5 1.5 0 0 1 1 15 Z" fill="#d9a915" stroke="#b98d0a" stroke-width="0.8"/><rect x="1.5" y="4.5" width="17" height="11.5" rx="1" fill="url(#fg)"/></svg>
<div class="tri" style="top:816px">7F (SP45)</div>
<svg class="a" style="left:29px;top:842px" width="12" height="12" viewBox="0 0 12 12"><rect x="0.5" y="0.5" width="11" height="11" rx="1" fill="url(#pb)" stroke="#8e9bab"/><path d="M3 6 H9 M6 3 V9" stroke="#2a3a4a" stroke-width="1.3"/></svg>
<svg class="a" style="left:44px;top:838px" width="20" height="17" viewBox="0 0 20 17"><path d="M1 2.5 A1.5 1.5 0 0 1 2.5 1 H7 L8.5 3 H17.5 A1.5 1.5 0 0 1 19 4.5 V15 A1.5 1.5 0 0 1 17.5 16.5 H2.5 A1.5 1.5 0 0 1 1 15 Z" fill="#d9a915" stroke="#b98d0a" stroke-width="0.8"/><rect x="1.5" y="4.5" width="17" height="11.5" rx="1" fill="url(#fg)"/></svg>
<div class="tri" style="top:841px">7G (SP45)</div>
<div class="a" style="left:4px;top:861px;width:289px;height:23px;background:#fde59a;border-top:1px dotted #333"></div>
<svg class="a" style="left:29px;top:867px" width="12" height="12" viewBox="0 0 12 12"><rect x="0.5" y="0.5" width="11" height="11" rx="1" fill="url(#pb)" stroke="#8e9bab"/><path d="M3 6 H9 M6 3 V9" stroke="#2a3a4a" stroke-width="1.3"/></svg>
<svg class="a" style="left:44px;top:863px" width="20" height="17" viewBox="0 0 20 17"><path d="M1 2.5 A1.5 1.5 0 0 1 2.5 1 H7 L8.5 3 H17.5 A1.5 1.5 0 0 1 19 4.5 V15 A1.5 1.5 0 0 1 17.5 16.5 H2.5 A1.5 1.5 0 0 1 1 15 Z" fill="#d9a915" stroke="#b98d0a" stroke-width="0.8"/><rect x="1.5" y="4.5" width="17" height="11.5" rx="1" fill="url(#fg)"/></svg>
<div class="tri" style="top:866px">8A (SP45)</div>
<svg class="a" style="left:29px;top:892px" width="12" height="12" viewBox="0 0 12 12"><rect x="0.5" y="0.5" width="11" height="11" rx="1" fill="url(#pb)" stroke="#8e9bab"/><path d="M3 6 H9 M6 3 V9" stroke="#2a3a4a" stroke-width="1.3"/></svg>
<svg class="a" style="left:44px;top:888px" width="20" height="17" viewBox="0 0 20 17"><path d="M1 2.5 A1.5 1.5 0 0 1 2.5 1 H7 L8.5 3 H17.5 A1.5 1.5 0 0 1 19 4.5 V15 A1.5 1.5 0 0 1 17.5 16.5 H2.5 A1.5 1.5 0 0 1 1 15 Z" fill="#d9a915" stroke="#b98d0a" stroke-width="0.8"/><rect x="1.5" y="4.5" width="17" height="11.5" rx="1" fill="url(#fg)"/></svg>
<div class="tri" style="top:891px">8B (SP45)</div>
<svg class="a" style="left:29px;top:917px" width="12" height="12" viewBox="0 0 12 12"><rect x="0.5" y="0.5" width="11" height="11" rx="1" fill="url(#pb)" stroke="#8e9bab"/><path d="M3 6 H9 M6 3 V9" stroke="#2a3a4a" stroke-width="1.3"/></svg>
<svg class="a" style="left:44px;top:913px" width="20" height="17" viewBox="0 0 20 17"><path d="M1 2.5 A1.5 1.5 0 0 1 2.5 1 H7 L8.5 3 H17.5 A1.5 1.5 0 0 1 19 4.5 V15 A1.5 1.5 0 0 1 17.5 16.5 H2.5 A1.5 1.5 0 0 1 1 15 Z" fill="#d9a915" stroke="#b98d0a" stroke-width="0.8"/><rect x="1.5" y="4.5" width="17" height="11.5" rx="1" fill="url(#fg)"/></svg>
<div class="tri" style="top:916px">8C (SP45)</div>
<svg class="a" style="left:29px;top:942px" width="12" height="12" viewBox="0 0 12 12"><rect x="0.5" y="0.5" width="11" height="11" rx="1" fill="url(#pb)" stroke="#8e9bab"/><path d="M3 6 H9 M6 3 V9" stroke="#2a3a4a" stroke-width="1.3"/></svg>
<svg class="a" style="left:44px;top:938px" width="20" height="17" viewBox="0 0 20 17"><path d="M1 2.5 A1.5 1.5 0 0 1 2.5 1 H7 L8.5 3 H17.5 A1.5 1.5 0 0 1 19 4.5 V15 A1.5 1.5 0 0 1 17.5 16.5 H2.5 A1.5 1.5 0 0 1 1 15 Z" fill="#d9a915" stroke="#b98d0a" stroke-width="0.8"/><rect x="1.5" y="4.5" width="17" height="11.5" rx="1" fill="url(#fg)"/></svg>
<div class="tri" style="top:941px">8D (SP45)</div>
<svg class="a" style="left:29px;top:967px" width="12" height="12" viewBox="0 0 12 12"><rect x="0.5" y="0.5" width="11" height="11" rx="1" fill="url(#pb)" stroke="#8e9bab"/><path d="M3 6 H9 M6 3 V9" stroke="#2a3a4a" stroke-width="1.3"/></svg>
<svg class="a" style="left:44px;top:963px" width="20" height="17" viewBox="0 0 20 17"><path d="M1 2.5 A1.5 1.5 0 0 1 2.5 1 H7 L8.5 3 H17.5 A1.5 1.5 0 0 1 19 4.5 V15 A1.5 1.5 0 0 1 17.5 16.5 H2.5 A1.5 1.5 0 0 1 1 15 Z" fill="#d9a915" stroke="#b98d0a" stroke-width="0.8"/><rect x="1.5" y="4.5" width="17" height="11.5" rx="1" fill="url(#fg)"/></svg>
<div class="tri" style="top:966px">8E (SP45)</div>
<svg class="a" style="left:29px;top:992px" width="12" height="12" viewBox="0 0 12 12"><rect x="0.5" y="0.5" width="11" height="11" rx="1" fill="url(#pb)" stroke="#8e9bab"/><path d="M3 6 H9 M6 3 V9" stroke="#2a3a4a" stroke-width="1.3"/></svg>
<svg class="a" style="left:44px;top:988px" width="20" height="17" viewBox="0 0 20 17"><path d="M1 2.5 A1.5 1.5 0 0 1 2.5 1 H7 L8.5 3 H17.5 A1.5 1.5 0 0 1 19 4.5 V15 A1.5 1.5 0 0 1 17.5 16.5 H2.5 A1.5 1.5 0 0 1 1 15 Z" fill="#d9a915" stroke="#b98d0a" stroke-width="0.8"/><rect x="1.5" y="4.5" width="17" height="11.5" rx="1" fill="url(#fg)"/></svg>
<div class="tri" style="top:991px">8F (SP45)</div>
<svg width="0" height="0" style="position:absolute"><defs><linearGradient id="pb" x1="0" y1="0" x2="0" y2="1"><stop offset="0" stop-color="#fafbfc"/><stop offset="1" stop-color="#c9d2dc"/></linearGradient><linearGradient id="fg" x1="0" y1="0" x2="0" y2="1"><stop offset="0" stop-color="#fff6b8"/><stop offset="0.5" stop-color="#f7dc5a"/><stop offset="1" stop-color="#e0b512"/></linearGradient></defs></svg>
<div class="t" style="left:7px;top:1013px;font-size:15.6px;color:#707070;text-decoration:underline">VULCAN sp. z o. o., Uonet+, wersja 21.13.0006.48471</div>
<div class="a" style="left:541px;top:253px;width:1347px;height:759px;background:#fff;border-bottom:1px solid #8aa2bb"></div>
<div class="a" style="left:325px;top:253px;width:217px;height:519px;background:#fff;border:1px solid #8aa2bb;border-right:none;border-radius:4px 0 0 4px"></div>
<svg class="a" style="left:334px;top:260px" width="18" height="18" viewBox="0 0 18 18"><rect x="1" y="1" width="3" height="15" fill="#4b2e16"/><rect x="4" y="1" width="10" height="15" fill="#e9c77e"/><rect x="6" y="4" width="6" height="3" fill="#f3f3ff"/><circle cx="13" cy="13" r="4.5" fill="#2e8ed6"/><rect x="12.3" y="11.5" width="1.4" height="4" fill="#fff"/><rect x="12.3" y="9.6" width="1.4" height="1.2" fill="#fff"/></svg>
<div class="t" style="left:357px;top:261px;font-size:15.6px;font-weight:bold;color:#1f3a5a">Dane dziennika</div>
<div class="a" style="left:326px;top:282px;width:215px;height:1px;background:#c5ccd4"></div>
<svg class="a" style="left:331px;top:292px" width="11" height="8" viewBox="0 0 11 8"><path d="M1 1 L4 4 L1 7 M6 1 L9 4 L6 7" stroke="#4f6a85" stroke-width="1.4" fill="none"/></svg>
<div class="mi" style="top:289px">Opis dziennika</div>
<svg class="a" style="left:331px;top:320px" width="11" height="8" viewBox="0 0 11 8"><path d="M1 1 L4 4 L1 7 M6 1 L9 4 L6 7" stroke="#4f6a85" stroke-width="1.4" fill="none"/></svg>
<div class="mi" style="top:317px">Tematy</div>
<svg class="a" style="left:331px;top:347px" width="11" height="8" viewBox="0 0 11 8"><path d="M1 1 L4 4 L1 7 M6 1 L9 4 L6 7" stroke="#4f6a85" stroke-width="1.4" fill="none"/></svg>
<div class="mi" style="top:344px">Tematy przedmiotami</div>
<svg class="a" style="left:331px;top:375px" width="11" height="8" viewBox="0 0 11 8"><path d="M1 1 L4 4 L1 7 M6 1 L9 4 L6 7" stroke="#4f6a85" stroke-width="1.4" fill="none"/></svg>
<div class="mi" style="top:372px">Frekwencja</div>
<svg class="a" style="left:331px;top:402px" width="11" height="8" viewBox="0 0 11 8"><path d="M1 1 L4 4 L1 7 M6 1 L9 4 L6 7" stroke="#4f6a85" stroke-width="1.4" fill="none"/></svg>
<div class="mi" style="top:399px">Oceny bieżące</div>
<svg class="a" style="left:331px;top:430px" width="11" height="8" viewBox="0 0 11 8"><path d="M1 1 L4 4 L1 7 M6 1 L9 4 L6 7" stroke="#4f6a85" stroke-width="1.4" fill="none"/></svg>
<div class="mi" style="top:427px">Sprawdziany</div>
<svg class="a" style="left:331px;top:457px" width="11" height="8" viewBox="0 0 11 8"><path d="M1 1 L4 4 L1 7 M6 1 L9 4 L6 7" stroke="#4f6a85" stroke-width="1.4" fill="none"/></svg>
<div class="mi" style="top:454px">Zadania domowe</div>
<svg class="a" style="left:331px;top:490px" width="11" height="8" viewBox="0 0 11 8"><path d="M1 1 L4 4 L1 7 M6 1 L9 4 L6 7" stroke="#4f6a85" stroke-width="1.4" fill="none"/></svg>
<div class="mi" style="top:479px">Oceny śródroczne<br>i roczne</div>
<svg class="a" style="left:331px;top:526px" width="11" height="8" viewBox="0 0 11 8"><path d="M1 1 L4 4 L1 7 M6 1 L9 4 L6 7" stroke="#4f6a85" stroke-width="1.4" fill="none"/></svg>
<div class="mi" style="top:523px">Oceny zachowania</div>
<svg class="a" style="left:331px;top:553px" width="11" height="8" viewBox="0 0 11 8"><path d="M1 1 L4 4 L1 7 M6 1 L9 4 L6 7" stroke="#4f6a85" stroke-width="1.4" fill="none"/></svg>
<div class="mi" style="top:550px">Uwagi</div>
<div class="a" style="left:326px;top:572px;width:215px;height:27px;background:#fde59a"></div>
<svg class="a" style="left:331px;top:581px" width="11" height="8" viewBox="0 0 11 8"><path d="M1 1 L4 4 L1 7 M6 1 L9 4 L6 7" stroke="#4f6a85" stroke-width="1.4" fill="none"/></svg>
<div class="mi" style="top:578px">Plan oddziału</div>
<svg class="a" style="left:331px;top:608px" width="11" height="8" viewBox="0 0 11 8"><path d="M1 1 L4 4 L1 7 M6 1 L9 4 L6 7" stroke="#4f6a85" stroke-width="1.4" fill="none"/></svg>
<div class="mi" style="top:605px">Wycieczki</div>
<svg class="a" style="left:331px;top:636px" width="11" height="8" viewBox="0 0 11 8"><path d="M1 1 L4 4 L1 7 M6 1 L9 4 L6 7" stroke="#4f6a85" stroke-width="1.4" fill="none"/></svg>
<div class="mi" style="top:633px">Wydarzenia</div>
<svg class="a" style="left:331px;top:663px" width="11" height="8" viewBox="0 0 11 8"><path d="M1 1 L4 4 L1 7 M6 1 L9 4 L6 7" stroke="#4f6a85" stroke-width="1.4" fill="none"/></svg>
<div class="mi" style="top:660px">Kontakty z rodzicami</div>
<svg class="a" style="left:331px;top:691px" width="11" height="8" viewBox="0 0 11 8"><path d="M1 1 L4 4 L1 7 M6 1 L9 4 L6 7" stroke="#4f6a85" stroke-width="1.4" fill="none"/></svg>
<div class="mi" style="top:688px">Zebrania z rodzicami</div>
<svg class="a" style="left:331px;top:718px" width="11" height="8" viewBox="0 0 11 8"><path d="M1 1 L4 4 L1 7 M6 1 L9 4 L6 7" stroke="#4f6a85" stroke-width="1.4" fill="none"/></svg>
<div class="mi" style="top:715px">Obserwacje</div>
<svg class="a" style="left:331px;top:746px" width="11" height="8" viewBox="0 0 11 8"><path d="M1 1 L4 4 L1 7 M6 1 L9 4 L6 7" stroke="#4f6a85" stroke-width="1.4" fill="none"/></svg>
<div class="mi" style="top:743px">Kontrola dziennika</div>
<div class="a" style="left:325px;top:773px;width:217px;height:229px;background:#fff;border:1px solid #8aa2bb;border-right:none;border-radius:4px 0 0 4px"></div>
<svg class="a" style="left:333px;top:779px" width="20" height="18" viewBox="0 0 20 18"><rect x="1" y="1" width="3" height="15" fill="#4b2e16"/><rect x="4" y="1" width="10" height="15" fill="#e9c77e"/><rect x="6" y="4" width="6" height="3" fill="#f3f3ff"/><circle cx="13.5" cy="13" r="4.2" fill="#b8b8b8"/><circle cx="13.5" cy="13" r="1.6" fill="#eee"/></svg>
<div class="t" style="left:357px;top:780px;font-size:15.6px;font-weight:bold;color:#1f3a5a">Ustawienia dziennika</div>
<div class="a" style="left:326px;top:801px;width:215px;height:1px;background:#c5ccd4"></div>
<svg class="a" style="left:331px;top:811px" width="11" height="8" viewBox="0 0 11 8"><path d="M1 1 L4 4 L1 7 M6 1 L9 4 L6 7" stroke="#4f6a85" stroke-width="1.4" fill="none"/></svg>
<div class="mi" style="top:808px">Uczniowie</div>
<svg class="a" style="left:331px;top:839px" width="11" height="8" viewBox="0 0 11 8"><path d="M1 1 L4 4 L1 7 M6 1 L9 4 L6 7" stroke="#4f6a85" stroke-width="1.4" fill="none"/></svg>
<div class="mi" style="top:836px">Przedmioty i nauczyciele</div>
<svg class="a" style="left:331px;top:866px" width="11" height="8" viewBox="0 0 11 8"><path d="M1 1 L4 4 L1 7 M6 1 L9 4 L6 7" stroke="#4f6a85" stroke-width="1.4" fill="none"/></svg>
<div class="mi" style="top:863px">Programy nauczania</div>
<svg class="a" style="left:331px;top:894px" width="11" height="8" viewBox="0 0 11 8"><path d="M1 1 L4 4 L1 7 M6 1 L9 4 L6 7" stroke="#4f6a85" stroke-width="1.4" fill="none"/></svg>
<div class="mi" style="top:891px">Grupy</div>
<svg class="a" style="left:331px;top:921px" width="11" height="8" viewBox="0 0 11 8"><path d="M1 1 L4 4 L1 7 M6 1 L9 4 L6 7" stroke="#4f6a85" stroke-width="1.4" fill="none"/></svg>
<div class="mi" style="top:918px">Uczniowie i przedmioty</div>
<svg class="a" style="left:331px;top:949px" width="11" height="8" viewBox="0 0 11 8"><path d="M1 1 L4 4 L1 7 M6 1 L9 4 L6 7" stroke="#4f6a85" stroke-width="1.4" fill="none"/></svg>
<div class="mi" style="top:946px">Dyżurni</div>
<svg class="a" style="left:331px;top:976px" width="11" height="8" viewBox="0 0 11 8"><path d="M1 1 L4 4 L1 7 M6 1 L9 4 L6 7" stroke="#4f6a85" stroke-width="1.4" fill="none"/></svg>
<div class="mi" style="top:973px">Dodatkowe informacje</div>
<svg class="a" style="left:315px;top:609px" width="6" height="44" viewBox="0 0 6 44"><path d="M0 5 L5.6 0 V44 L0 39 Z" fill="#e9e9e9"/><path d="M1 22 L5 18.5 V25.5 Z" fill="#444"/></svg>
<div class="a" style="left:554px;top:265px;width:1320px;height:43px;border:1px solid #8aa2bb;background:#fff"></div>
<div class="t" style="left:568px;top:280px;font-size:14px">Tydzień</div>
<div class="a" style="left:630px;top:274px;width:89px;height:26px"></div>
<div class="a" style="left:630px;top:274px;width:190px;height:26px;border:1px solid #a9b0c6;background:linear-gradient(#eef0f2 0,#fff 8px)"></div>
<div class="t" style="left:635px;top:280px;font-size:15px">13.09 - 19.09 2021</div>
<div class="a" style="left:798px;top:275px;width:21px;height:24px;border-left:1px solid #c0c4d0;background:linear-gradient(#f0f0f0,#d6d6d6)"></div>
<svg class="a" style="left:801px;top:278px" width="15" height="15" viewBox="0 0 15 15"><rect x="0.5" y="1.5" width="14" height="13" fill="#dfe6f0" stroke="#7d93b0"/><path d="M0.5 5 H14.5 M4 5 V14.5 M7.5 5 V14.5 M11 5 V14.5 M0.5 8.5 H14.5 M0.5 11.5 H14.5" stroke="#a9b8cc" stroke-width="0.8"/><circle cx="11" cy="3.5" r="2.5" fill="none" stroke="#c0392b" stroke-width="1.2"/></svg>
<div class="a" style="left:833px;top:274px;width:36px;height:26px;border:1px solid #c6c6c6;border-radius:3px;background:linear-gradient(#f7f7f7 0,#efefef 45%,#e2e2e2 55%,#dcdcdc 100%);font-size:13px;line-height:24px;text-align:center;color:#222;white-space:nowrap;letter-spacing:2px;padding-left:2px;">&lt;&lt;</div>
<div class="a" style="left:884px;top:274px;width:36px;height:25px;border-radius:3px;background:linear-gradient(#fde796,#f3de8c);font-size:13px;letter-spacing:2px;padding-left:2px;line-height:24px;text-align:center;color:#222">&gt;&gt;</div>
<div class="a" style="left:935px;top:274px;width:145px;height:26px;border:1px solid #c6c6c6;border-radius:3px;background:linear-gradient(#f7f7f7 0,#efefef 45%,#e2e2e2 55%,#dcdcdc 100%);font-size:13.6px;line-height:24px;text-align:center;color:#222;white-space:nowrap;">Kopiuj istniejący plan</div>
<div class="a" style="left:1094px;top:274px;width:146px;height:26px;border:1px solid #c6c6c6;border-radius:3px;background:linear-gradient(#f7f7f7 0,#efefef 45%,#e2e2e2 55%,#dcdcdc 100%);font-size:13.6px;line-height:24px;text-align:center;color:#222;white-space:nowrap;">Kopiuj wybrany dzień</div>
<div class="a" style="left:1859px;top:308px;width:21px;height:660px;background:#f1f1f1"></div>
<div class="a" style="left:1861px;top:329px;width:17px;height:410px;background:#c1c1c1"></div>
<svg class="a" style="left:1864px;top:316px" width="10" height="6" viewBox="0 0 10 6"><path d="M0 5.5 L5 0.5 L10 5.5 Z" fill="#a3a3a3"/></svg>
<svg class="a" style="left:1864px;top:953px" width="10" height="6" viewBox="0 0 10 6"><path d="M0 0.5 L5 5.5 L10 0.5 Z" fill="#505050"/></svg>
<div class="a" style="left:1890px;top:253px;width:30px;height:759px;background:linear-gradient(90deg,#8aa5c1 0,#86a2bf 15px,#9db3ca 16px,#9db3ca 100%)"></div>
<div class="a" style="left:1897px;top:259px;width:17px;height:17px;border-radius:3px;background:linear-gradient(#ffffff,#dbe8f5);border:1px solid #c6d6e6"></div>
<svg class="a" style="left:1899px;top:262px" width="13" height="11" viewBox="0 0 13 11"><path d="M6 1 L2 5.5 L6 10 M11 1 L7 5.5 L11 10" stroke="#3a6a9a" stroke-width="1.6" fill="none"/></svg>
<div class="t" style="left:1896px;top:281px;font-size:14.5px;font-weight:bold;color:#fff;writing-mode:vertical-rl;line-height:18px">Pobieranie przygotowanych plików</div>
<div class="a" style="left:560px;top:320px;width:1286px;height:497px;border:1px solid #8aa2bb;background:#fff"></div>
<div class="a" style="left:560px;top:320px;width:1286px;height:33px;background:linear-gradient(#bcc7cf 0,#bcc7cf 1px,#a3b8cc 2px,#97aec6 14px,#7391b2 14px,#7d9bb9 16px,#88a3bf 26px,#8eaac3 32px);border:1px solid #8aa2bb;border-bottom:none"></div><div class="t" style="left:570px;top:329px;font-size:14.5px;font-weight:bold;color:#fff;text-shadow:0 0 2px #6f8aa6,0 0 1px #6f8aa6">Plan oddziału</div><div class="a" style="left:1821px;top:327px;width:17px;height:17px;border-radius:4px;background:linear-gradient(#f8feff,#d3e6fa);border:1px solid #a9c8f0;box-shadow:0 0 1px #cfe2fb"></div><svg class="a" style="left:1824px;top:330px" width="11" height="11" viewBox="0 0 11 11"><path d="M0.5 4.8 L5.5 0.6 L10.5 4.8 L9 5.8 L5.5 2.9 L2 5.8 Z M0.5 9.8 L5.5 5.6 L10.5 9.8 L9 10.8 L5.5 7.9 L2 10.8 Z" fill="#4878aa"/></svg>
<div class="a" style="left:568px;top:359px;width:1270px;height:413px;border:1px solid #8aa2bb;border-top-color:#8a9fb6;background:#fff"></div><div class="a" style="left:569px;top:360px;width:1268px;height:25px;background:#dae1ea;border-bottom:2px solid #869db6"></div><div class="hd" style="left:595px;width:245px;top:360px">Poniedziałek,13.09.2021</div><div class="hd" style="left:844px;width:245px;top:360px">Wtorek,14.09.2021</div><div class="hd" style="left:1093px;width:245px;top:360px">Środa,15.09.2021</div><div class="hd" style="left:1342px;width:245px;top:360px">Czwartek,16.09.2021</div><div class="hd" style="left:1591px;width:246px;top:360px">Piątek,17.09.2021</div><div class="a" style="left:569px;top:385px;width:1268px;height:23px;background:#fff"></div><div class="a" style="left:569px;top:408px;width:1268px;height:1px;background:#cdcdcd"></div><div class="cell" style="left:568px;width:23px;text-align:center;letter-spacing:0;top:388px">0</div><div class="a" style="left:569px;top:409px;width:1268px;height:23px;background:#f0f0f0"></div><div class="a" style="left:569px;top:432px;width:1268px;height:1px;background:#cdcdcd"></div><div class="cell" style="left:568px;width:23px;text-align:center;letter-spacing:0;top:412px">1</div><div class="cell" style="left:604px;top:412px">wf [WF gr 1] [KC] [s. duża1]</div><div class="cell" style="left:1102px;top:412px">zaj. wych. [AP] [84]</div><div class="cell" style="left:1351px;top:412px">matematyka [WM] [25]</div><div class="a" style="left:569px;top:433px;width:1268px;height:41px;background:#fff"></div><div class="a" style="left:569px;top:474px;width:1268px;height:1px;background:#cdcdcd"></div><div class="cell" style="left:568px;width:23px;text-align:center;letter-spacing:0;top:436px">2</div><div class="cell" style="left:604px;top:436px">wf [WF gr 1] [KC] [s. mała]<br>wf [Wf gr 2] [GA] [b.1]</div><div class="cell" style="left:853px;top:436px">zaj_kszt_kreat [KL] [45]</div><div class="cell" style="left:1102px;top:436px">j. francuski [AP] [84]</div><div class="cell" style="left:1351px;top:436px">e_dla_bezp [AW] [41]</div><div class="cell" style="left:1600px;top:436px">wf [WF gr 1] [KC] [b.1]<br>wf [Wf gr 2] [GA] [s. lust.]</div><div class="a" style="left:569px;top:475px;width:1268px;height:42px;background:#f0f0f0"></div><div class="a" style="left:569px;top:517px;width:1268px;height:1px;background:#cdcdcd"></div><div class="cell" style="left:568px;width:23px;text-align:center;letter-spacing:0;top:478px">3</div><div class="cell" style="left:604px;top:478px">fizyka [EP] [64]<br>matematyka [IND] [WM]</div><div class="cell" style="left:853px;top:478px">informatyka [Info 1] [SZ] [38]<br>wf [Wf gr 2] [GA] [s. lust.]</div><div class="cell" style="left:1102px;top:478px">j. angielski [BK] [79]</div><div class="cell" style="left:1351px;top:478px">j. angielski [BK] [79]</div><div class="cell" style="left:1600px;top:478px">matematyka [WM] [25]</div><div class="a" style="left:569px;top:518px;width:1268px;height:22px;background:#fff"></div><div class="a" style="left:569px;top:540px;width:1268px;height:1px;background:#cdcdcd"></div><div class="cell" style="left:568px;width:23px;text-align:center;letter-spacing:0;top:521px">4</div><div class="cell" style="left:604px;top:521px">j. polski [KL] [84]</div><div class="cell" style="left:853px;top:521px">historia [RW] [29]</div><div class="cell" style="left:1102px;top:521px">matematyka [WM] [25]</div><div class="cell" style="left:1351px;top:521px">j. polski [KL] [45]</div><div class="cell" style="left:1600px;top:521px">chemia [AA] [15]</div><div class="a" style="left:569px;top:541px;width:1268px;height:24px;background:#f0f0f0"></div><div class="a" style="left:569px;top:565px;width:1268px;height:1px;background:#cdcdcd"></div><div class="cell" style="left:568px;width:23px;text-align:center;letter-spacing:0;top:544px">5</div><div class="cell" style="left:604px;top:544px">j. angielski [BK] [79]</div><div class="cell" style="left:853px;top:544px">matematyka [WM] [25]</div><div class="cell" style="left:1102px;top:544px">j. polski [KL] [45]</div><div class="cell" style="left:1351px;top:544px">geografia [AW] [41]</div><div class="cell" style="left:1600px;top:544px">fizyka [EP] [64]</div><div class="a" style="left:569px;top:566px;width:1268px;height:42px;background:#fff"></div><div class="a" style="left:569px;top:608px;width:1268px;height:1px;background:#cdcdcd"></div><div class="cell" style="left:568px;width:23px;text-align:center;letter-spacing:0;top:569px">6</div><div class="cell" style="left:604px;top:569px">chemia [AA] [15]<br>geografia [IND] [AW]</div><div class="cell" style="left:853px;top:569px">j. polski [KL] [45]</div><div class="cell" style="left:1102px;top:569px">j. polski [KL] [45]</div><div class="cell" style="left:1351px;top:569px">historia [RW] [29]</div><div class="cell" style="left:1600px;top:569px">wos [EM] [15]</div><div class="a" style="left:569px;top:609px;width:1268px;height:41px;background:#f0f0f0"></div><div class="a" style="left:569px;top:650px;width:1268px;height:1px;background:#cdcdcd"></div><div class="cell" style="left:568px;width:23px;text-align:center;letter-spacing:0;top:612px">7</div><div class="cell" style="left:604px;top:612px">j. francuski [AP] [84]</div><div class="cell" style="left:853px;top:612px">biologia [WI] [32]</div><div class="cell" style="left:1102px;top:612px">biologia [WI]<br>religia [rel] [OK] [81]</div><div class="cell" style="left:1351px;top:612px">wf [WF gr 1] [KC] [s. duża1]<br>wf [Wf gr 2] [GA] [s. mała]</div><div class="cell" style="left:1600px;top:612px">informatyka [Info 2] [SZ] [38]</div><div class="a" style="left:569px;top:651px;width:1268px;height:23px;background:#fff"></div><div class="a" style="left:569px;top:674px;width:1268px;height:1px;background:#cdcdcd"></div><div class="cell" style="left:568px;width:23px;text-align:center;letter-spacing:0;top:654px">8</div><div class="cell" style="left:604px;top:654px">wos [EM] [25]</div><div class="cell" style="left:1351px;top:654px">religia [rel] [OK] [30]</div><div class="a" style="left:569px;top:675px;width:1268px;height:24px;background:#f0f0f0"></div><div class="a" style="left:569px;top:699px;width:1268px;height:1px;background:#cdcdcd"></div><div class="cell" style="left:568px;width:23px;text-align:center;letter-spacing:0;top:678px">9</div><div class="a" style="left:569px;top:700px;width:1268px;height:23px;background:#fff"></div><div class="a" style="left:569px;top:723px;width:1268px;height:1px;background:#cdcdcd"></div><div class="cell" style="left:568px;width:23px;text-align:center;letter-spacing:0;top:703px">10</div><div class="a" style="left:569px;top:724px;width:1268px;height:23px;background:#f0f0f0"></div><div class="a" style="left:569px;top:747px;width:1268px;height:1px;background:#cdcdcd"></div><div class="cell" style="left:568px;width:23px;text-align:center;letter-spacing:0;top:727px">11</div><div class="a" style="left:569px;top:748px;width:1268px;height:23px;background:#fff"></div><div class="cell" style="left:568px;width:23px;text-align:center;letter-spacing:0;top:751px">12</div><div class="a" style="left:591px;top:360px;width:4px;height:411px;background:#8da3ba"></div><div class="a" style="left:840px;top:360px;width:4px;height:411px;background:#8da3ba"></div><div class="a" style="left:1089px;top:360px;width:4px;height:411px;background:#8da3ba"></div><div class="a" style="left:1338px;top:360px;width:4px;height:411px;background:#8da3ba"></div><div class="a" style="left:1587px;top:360px;width:4px;height:411px;background:#8da3ba"></div>
<div class="a" style="left:1759px;top:777px;width:75px;height:27px;border:1px solid #cfcfcf;border-radius:3px;background:linear-gradient(#fafafa 0,#f2f2f2 50%,#e4e4e4 60%,#e0e0e0 100%)"></div>
<svg class="a" style="left:1764px;top:782px" width="17" height="17" viewBox="0 0 17 17"><path d="M11 1.5 L15 5.5 L6.5 14 L2.5 10 Z" fill="#4a90e2"/><path d="M2.5 10 L6.5 14 L3 15 L1.5 13.5 Z" fill="#e8eef5"/><circle cx="1.8" cy="15.5" r="0.9" fill="#6a7a8a"/></svg>
<div class="t" style="left:1788px;top:784px;font-size:14px;color:#222">Zmień</div>
<div class="a" style="left:560px;top:829px;width:1286px;height:150px;border:1px solid #8aa2bb;background:#fff"></div>
<div class="a" style="left:560px;top:829px;width:1286px;height:33px;background:linear-gradient(#bcc7cf 0,#bcc7cf 1px,#a3b8cc 2px,#97aec6 14px,#7391b2 14px,#7d9bb9 16px,#88a3bf 26px,#8eaac3 32px);border:1px solid #8aa2bb;border-bottom:none"></div><div class="t" style="left:570px;top:838px;font-size:14.5px;font-weight:bold;color:#fff;text-shadow:0 0 2px #6f8aa6,0 0 1px #6f8aa6">Zmiany w planie oddziału (zastępstwa, przeniesienia, nieobecności, podział na grupy, złączenia grup)</div><div class="a" style="left:1821px;top:836px;width:17px;height:17px;border-radius:4px;background:linear-gradient(#f8feff,#d3e6fa);border:1px solid #a9c8f0;box-shadow:0 0 1px #cfe2fb"></div><svg class="a" style="left:1824px;top:839px" width="11" height="11" viewBox="0 0 11 11"><path d="M0.5 4.8 L5.5 0.6 L10.5 4.8 L9 5.8 L5.5 2.9 L2 5.8 Z M0.5 9.8 L5.5 5.6 L10.5 9.8 L9 10.8 L5.5 7.9 L2 10.8 Z" fill="#4878aa"/></svg>
<div class="a" style="left:568px;top:868px;width:1270px;height:100px;border:1px solid #8aa2bb;border-top-color:#8a9fb6;background:#fff"></div><div class="a" style="left:569px;top:869px;width:1268px;height:25px;background:#dae1ea;border-bottom:2px solid #869db6"></div><div class="hd" style="left:595px;width:245px;top:869px">Poniedziałek,13.09.2021</div><div class="hd" style="left:844px;width:245px;top:869px">Wtorek,14.09.2021</div><div class="hd" style="left:1093px;width:245px;top:869px">Środa,15.09.2021</div><div class="hd" style="left:1342px;width:245px;top:869px">Czwartek,16.09.2021</div><div class="hd" style="left:1591px;width:246px;top:869px">Piątek,17.09.2021</div><div class="a" style="left:569px;top:893px;width:1268px;height:24px;background:#fff"></div><div class="a" style="left:569px;top:917px;width:1268px;height:1px;background:#cdcdcd"></div><div class="cell" style="left:568px;width:23px;text-align:center;letter-spacing:0;top:896px">0</div><div class="a" style="left:569px;top:918px;width:1268px;height:23px;background:#f0f0f0"></div><div class="a" style="left:569px;top:941px;width:1268px;height:1px;background:#cdcdcd"></div><div class="cell" style="left:568px;width:23px;text-align:center;letter-spacing:0;top:921px">1</div><div class="cell" style="left:604px;top:921px">wf [WF gr 1] [KC] [s. duża1]</div><div class="cell" style="left:1102px;top:921px">zaj. wych. [AP] [84]</div><div class="cell" style="left:1351px;top:921px">matematyka [WM] [25]</div><div class="a" style="left:569px;top:942px;width:1268px;height:26px;background:#fff"></div><div class="cell" style="left:568px;width:23px;text-align:center;letter-spacing:0;top:945px">2</div><div class="cell" style="left:604px;top:945px">wf [WF gr 1] [KC] [s. mała]<br>wf [Wf gr 2] [GA] [b.1]</div><div class="cell" style="left:853px;top:945px">zaj_kszt_kreat [KL] [45]</div><div class="cell" style="left:1102px;top:945px">j. francuski [AP] [84]</div><div class="cell" style="left:1351px;top:945px">e_dla_bezp [AW] [41]</div><div class="cell" style="left:1600px;top:945px">wf [WF gr 1] [KC] [b.1]<br>wf [Wf gr 2] [GA] [s. lust.]</div><div class="a" style="left:591px;top:869px;width:4px;height:99px;background:#8da3ba"></div><div class="a" style="left:840px;top:869px;width:4px;height:99px;background:#8da3ba"></div><div class="a" style="left:1089px;top:869px;width:4px;height:99px;background:#8da3ba"></div><div class="a" style="left:1338px;top:869px;width:4px;height:99px;background:#8da3ba"></div><div class="a" style="left:1587px;top:869px;width:4px;height:99px;background:#8da3ba"></div>
<div class="a" style="left:542px;top:968px;width:1345px;height:43px;background:#fff"></div>
<div class="a" style="left:315px;top:1002px;width:226px;height:10px;background:#cbd5e1"></div>
<div class="a" style="left:315px;top:1001px;width:226px;height:1px;background:#8aa2bb"></div>
<div class="a" style="left:0;top:1012px;width:1920px;height:19px;background:#cbd5e1"></div>
<div class="a" style="left:541px;top:1011px;width:1347px;height:1px;background:#8aa2bb"></div>
<div class="t" style="left:7px;top:1013px;font-size:15.6px;color:#707070;text-decoration:underline">VULCAN sp. z o. o., Uonet+, wersja 21.13.0006.48471</div>
<div class="a" style="left:0;top:1030px;width:1920px;height:50px;background:#d3e0eb"></div>
<svg class="a" style="left:20px;top:1045px" width="20" height="20" viewBox="0 0 20 20"><path d="M0 2.8 L8 1.7 V9.2 H0 Z M9.6 1.4 L20 0 V9.2 H9.6 Z M0 10.8 H8 V18.3 L0 17.2 Z M9.6 10.8 H20 V20 L9.6 18.6 Z" fill="#000"/></svg>
<div class="a" style="left:60px;top:1030px;width:429px;height:50px;background:#fff;border:1px solid #c7cdd3;border-bottom:none"></div>
<svg class="a" style="left:75px;top:1044px" width="22" height="22" viewBox="0 0 22 22"><circle cx="13" cy="9" r="6.5" stroke="#000" stroke-width="1.6" fill="none"/><path d="M8.5 13.5 L1.5 20.5" stroke="#000" stroke-width="1.8"/></svg>
<div class="t" style="left:110px;top:1047px;font-size:18.7px;color:#1a1a1a">Wpisz tu wyszukiwane słowa</div>
<div class="a" style="left:510px;top:1045px;width:20px;height:20px;border-radius:50%;border:2.5px solid #000"></div>
<svg class="a" style="left:569px;top:1045px" width="22" height="20" viewBox="0 0 22 20"><rect x="1" y="4" width="14" height="12" stroke="#000" stroke-width="1.5" fill="none"/><path d="M1 1 H15 M1 19 H15 M19 1 V19" stroke="#000" stroke-width="1.5"/><rect x="17.5" y="6" width="3" height="4" fill="#000"/></svg>
<svg class="a" style="left:630px;top:1043px" width="28" height="24" viewBox="0 0 28 24"><path d="M0 1.5 A1.5 1.5 0 0 1 1.5 0 H11 L13 2 V4 H0 Z" fill="#e3a20e"/><rect x="0" y="2.5" width="27" height="20.5" rx="1.5" fill="#fcd56a"/><rect x="0" y="2.5" width="27" height="10" rx="1.5" fill="#fde08a"/><path d="M5.5 23 V14 A2 2 0 0 1 7.5 12 H20 A2 2 0 0 1 22 14 V23 H18.5 V15.5 H9 V23 Z" fill="#3a8ee0"/></svg>
<svg class="a" style="left:691px;top:1041px" width="30" height="28" viewBox="0 0 30 28"><path d="M15 0 L30 9.5 H0 Z" fill="#0f5eb4"/><path d="M0 9.5 H30 V28 H0 Z" fill="#1f9ae8"/><path d="M3 9.5 H27 L15 17 Z" fill="#f4f4f4"/><path d="M15 17 L30 9.5 V28 Z" fill="#3cc4f2"/><path d="M0 28 L15 17 L30 28 Z" fill="#1a8cd8" opacity=".6"/></svg>
<div class="a" style="left:738px;top:1031px;width:61px;height:49px;background:#e6ecf3"></div>
<div class="a" style="left:738px;top:1077px;width:61px;height:3px;background:#1a73c8"></div>
<svg class="a" style="left:753px;top:1041px" width="29" height="29" viewBox="0 0 29 29"><circle cx="14.5" cy="14.5" r="14" fill="#dd4b39"/><path d="M14.5 14.5 L2.4 21.5 A14 14 0 0 0 20.5 27.2 Z" fill="#1da462"/><path d="M14.5 14.5 L20.5 27.2 A14 14 0 0 0 28.5 14.5 L26.5 8.2 Z" fill="#ffcd40"/><path d="M14.5 14.5 L2.4 21.5 A14 14 0 0 1 2.5 7.5 Z" fill="#1da462"/><path d="M14.5 8 H27 A14 14 0 0 0 2.5 7.5 L8.7 18 Z" fill="#dd4b39"/><circle cx="14.5" cy="14.5" r="6.3" fill="#fff"/><circle cx="14.5" cy="14.5" r="4.8" fill="#4c8bf5"/></svg>
<svg class="a" style="left:815px;top:1041px" width="29" height="28" viewBox="0 0 29 28"><rect x="0" y="0" width="29" height="28" rx="1.5" fill="#2c9be8"/><path d="M0 28 V17 L9 9 L20 20 L29 13 V28 Z" fill="#1b5aa5"/><path d="M9 28 L20 17 L29 24 V28 Z" fill="#3f7fd2"/><circle cx="19" cy="7" r="2.7" fill="#fff"/></svg>
<svg class="a" style="left:877px;top:1040px" width="29" height="30" viewBox="0 0 29 30"><rect x="0" y="0" width="29" height="30" fill="#111"/><defs><linearGradient id="rb" x1="0" y1="0" x2="1" y2="1"><stop offset="0" stop-color="#ff2a2a"/><stop offset=".3" stop-color="#ffd800"/><stop offset=".55" stop-color="#2bd52b"/><stop offset=".8" stop-color="#1e6fff"/><stop offset="1" stop-color="#8a2be2"/></linearGradient></defs><rect x="2" y="4" width="25" height="22" fill="url(#rb)"/><path d="M2 1.5 H27 M2 28.5 H27" stroke="#fff" stroke-width="1.2" stroke-dasharray="2 2"/></svg>
<svg class="a" style="left:939px;top:1040px" width="30" height="29" viewBox="0 0 30 29"><ellipse cx="13" cy="17" rx="12" ry="9" fill="#dfe9f2" stroke="#a9bccf"/><circle cx="8" cy="14" r="2" fill="#e53935"/><circle cx="13" cy="12" r="2" fill="#43a047"/><circle cx="18" cy="13" r="2" fill="#fbc02d"/><circle cx="7" cy="20" r="2" fill="#1e88e5"/><path d="M27 2 L15 24" stroke="#c88a3a" stroke-width="3"/><path d="M27 1 L29 3 L26 6 Z" fill="#e0a040"/></svg>
<svg class="a" style="left:1000px;top:1040px" width="36" height="32" viewBox="0 0 36 32"><circle cx="22" cy="5" r="4" fill="#7b83eb"/><circle cx="30" cy="7" r="3" fill="#5059c9"/><rect x="18" y="10" width="16" height="14" rx="3" fill="#5059c9"/><rect x="12" y="9" width="16" height="17" rx="3" fill="#7b83eb"/><rect x="1" y="6" width="16" height="16" rx="1.5" fill="#4b53bc"/><path d="M4.5 10 H13.5 M9 10 V19" stroke="#fff" stroke-width="2.2"/><circle cx="24" cy="23" r="8" fill="#c4314b"/></svg>
<div class="t" style="left:1017px;top:1057px;font-size:11px;font-weight:bold;color:#fff">9+</div>
<div class="a" style="left:991px;top:1077px;width:51px;height:3px;background:#1a73c8"></div>
<svg class="a" style="left:1402px;top:1041px" width="30" height="26" viewBox="0 0 30 26"><defs><mask id="mm"><rect width="30" height="26" fill="#fff"/><circle cx="5" cy="2.5" r="6.3" fill="#000"/></mask><linearGradient id="cl" x1="0" y1="0" x2="0" y2="1"><stop offset="0" stop-color="#f2f9fe"/><stop offset="1" stop-color="#b9dbf4"/></linearGradient></defs><circle cx="9" cy="7" r="6.8" fill="#f7c21c" mask="url(#mm)"/><path d="M7.5 24.5 A4.3 4.3 0 0 1 6.5 16 A6.3 6.3 0 0 1 18 13 A5.3 5.3 0 0 1 28 19 A4.6 4.6 0 0 1 24.5 24.5 Z" fill="url(#cl)" stroke="#9ecbec" stroke-width="1"/></svg>
<div class="t" style="left:1442px;top:1049px;font-size:17.4px;color:#111">7°C&nbsp; Cz. pochmurnie</div>
<svg class="a" style="left:1624px;top:1048px" width="18" height="11" viewBox="0 0 18 11"><path d="M1 10 L9 2 L17 10" stroke="#111" stroke-width="1.5" fill="none"/></svg>
<svg class="a" style="left:1654px;top:1045px" width="20" height="20" viewBox="0 0 20 20"><rect x="3" y="5" width="10" height="10" rx="2" stroke="#111" stroke-width="1.4" fill="none"/><path d="M13 8 L18 5.5 V14.5 L13 12" stroke="#111" stroke-width="1.4" fill="none"/><path d="M2 3 A9 9 0 0 1 16 3 M2 17 A9 9 0 0 0 16 17" stroke="#111" stroke-width="1" fill="none"/></svg>
<svg class="a" style="left:1682px;top:1045px" width="22" height="21" viewBox="0 0 22 21"><path d="M1 4 L20 1 V15 L1 18 Z" stroke="#111" stroke-width="1.4" fill="none"/><path d="M7 8 A4 4 0 0 1 14 8 M14 11 A4 4 0 0 1 7 11" stroke="#111" stroke-width="1.2" fill="none"/><circle cx="15.5" cy="16" r="4" fill="#f7801a"/></svg>
<svg class="a" style="left:1711px;top:1047px" width="22" height="14" viewBox="0 0 22 14"><rect x="4" y="3" width="16" height="9" stroke="#111" stroke-width="1.4" fill="#111"/><rect x="20" y="5.5" width="1.5" height="4" fill="#111"/><path d="M0 4 H4 M1.5 1 V4" stroke="#111" stroke-width="1.2"/></svg>
<svg class="a" style="left:1742px;top:1044px" width="22" height="20" viewBox="0 0 22 20"><path d="M1 7 H5 L10 2 V18 L5 13 H1 Z" stroke="#111" stroke-width="1.3" fill="none"/><path d="M13 7 A4 4 0 0 1 13 13 M15.5 4.5 A7.5 7.5 0 0 1 15.5 15.5 M18 2 A11 11 0 0 1 18 18" stroke="#111" stroke-width="1.2" fill="none"/></svg>
<div class="t" style="left:1792px;top:1036px;font-size:14.6px;color:#111">19:22</div>
<div class="t" style="left:1776px;top:1059px;font-size:14.6px;color:#111">03.01.2022</div>
<svg class="a" style="left:1868px;top:1044px" width="22" height="22" viewBox="0 0 22 22"><path d="M1 1 H21 V16 H12 L9 20 L8 16 H1 Z" stroke="#111" stroke-width="1.3" fill="none" stroke-linejoin="round"/></svg>
<div class="a" style="left:1914px;top:1031px;width:1px;height:49px;background:#a8b4c0"></div>
</body></html>
